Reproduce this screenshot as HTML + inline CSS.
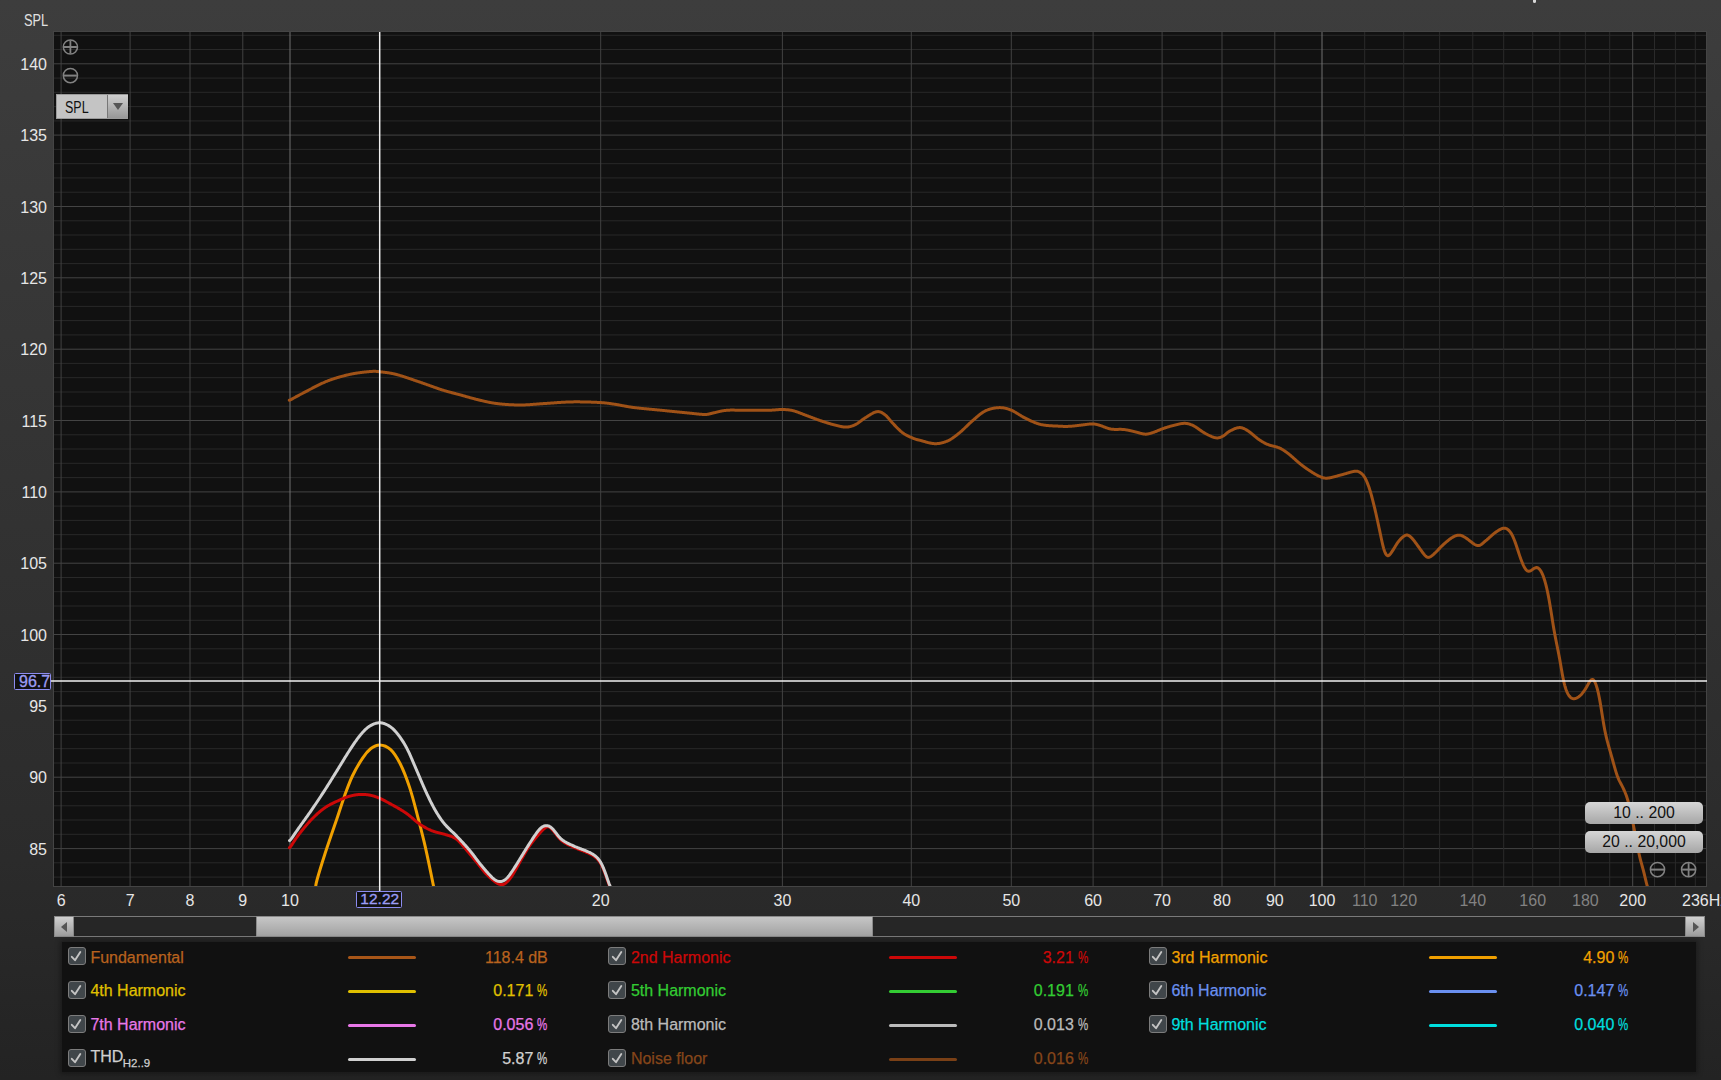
<!DOCTYPE html>
<html><head><meta charset="utf-8"><style>
*{margin:0;padding:0;box-sizing:border-box}
html,body{width:1721px;height:1080px;overflow:hidden}
body{background:linear-gradient(#3d3d3d 0px,#2b2b2b 860px,#232323 1080px);position:relative;font-family:"Liberation Sans",sans-serif;}
svg.main{position:absolute;left:0;top:0}
.yl{position:absolute;left:0;width:47px;text-align:right;color:#e6e6e6;font-size:16px;line-height:18px}
.xl{position:absolute;top:892px;width:100px;text-align:center;font-size:16px;line-height:18px}
.xw{color:#e6e6e6}.xg{color:#828282}
.spl{position:absolute;left:23.8px;top:12px;color:#e0e0e0;font-size:16px;line-height:18px;transform:scaleX(0.8);transform-origin:left}
.cursorx{position:absolute;left:355.5px;top:891px;width:46.5px;height:17px;border:1.2px solid #8c8cf0;border-radius:1.5px;background:#111;color:#9c9cf4;font-size:15.5px;line-height:14px;text-align:center;-webkit-text-stroke:0.3px currentColor;padding-left:2px}
.cursory{position:absolute;left:14px;top:672.8px;width:37px;height:17px;border:1.2px solid #8c8cf0;border-radius:1.5px;background:#111}
.cursory span{position:absolute;left:4px;top:-0.8px;color:#9c9cf4;font-size:16px;line-height:18px;-webkit-text-stroke:0.3px currentColor}
.dd{position:absolute;left:56px;top:94px;width:72px;height:25px;background:#c4c4c4;border:1px solid #9a9a9a}
.dd span{position:absolute;left:7.5px;top:2.8px;font-size:16px;line-height:19px;color:#111;transform:scaleX(0.78);transform-origin:left}
.dd i{position:absolute;left:50px;top:0;width:21px;height:23px;background:linear-gradient(#cfcfcf,#989898);border-left:1px solid #777}
.dd i:after{content:"";position:absolute;left:5px;top:8px;border-left:5.5px solid transparent;border-right:5.5px solid transparent;border-top:7px solid #555}
.btn{position:absolute;left:1585px;width:118px;height:22px;border-radius:5px;background:linear-gradient(#d6d6d6,#a6a6a6);color:#111;font-size:15.8px;line-height:22px;text-align:center}
.sb{position:absolute;left:54px;top:916px;width:1651px;height:21px;background:#262626;border:1px solid #7a7a7a}
.sbl,.sbr{position:absolute;top:-1px;width:20px;height:21px;background:linear-gradient(#d0d0d0,#9c9c9c);border:1px solid #8a8a8a}
.sbl{left:-1px}.sbr{right:-1px}
.sbl:after{content:"";position:absolute;left:5.5px;top:4.5px;border-top:5px solid transparent;border-bottom:5px solid transparent;border-right:6px solid #555}
.sbr:after{content:"";position:absolute;left:6.5px;top:4.5px;border-top:5px solid transparent;border-bottom:5px solid transparent;border-left:6px solid #555}
.thumb{position:absolute;left:201px;top:-1px;width:617px;height:21px;background:linear-gradient(#c6c6c6,#a2a2a2);border:1px solid #8a8a8a}
.panel{position:absolute;left:62px;top:942px;width:1634px;height:130px;background:#111;box-shadow:0 0 5px 2px rgba(0,0,0,0.3)}
.cb{position:absolute;width:18px;height:18px;border:1.5px solid #7c7c7c;border-radius:3px;background:#40464a}
.cb svg{position:absolute;left:-1.5px;top:-1.5px}
.ln{position:absolute;-webkit-text-stroke:0.25px currentColor;font-size:16px;line-height:18px;white-space:nowrap}
.ln sub{font-size:11.5px;vertical-align:-4.5px;line-height:0;margin-left:-0.5px}
.ls{position:absolute;width:68px;height:3px;border-radius:1.5px}
.pc{display:inline-block;width:10.5px;margin-left:4px;transform:scaleX(0.72);transform-origin:left}
.lv{position:absolute;-webkit-text-stroke:0.25px currentColor;width:200px;text-align:right;font-size:16px;line-height:18px;white-space:nowrap}
</style></head><body>
<svg class="main" width="1721" height="1080" viewBox="0 0 1721 1080">
<defs><clipPath id="pc"><rect x="54" y="32" width="1653" height="855"/></clipPath></defs>
<rect x="54" y="32" width="1653" height="855" fill="#111"/>
<line x1="54" x2="1707" y1="35.3" y2="35.3" stroke="#292929" stroke-width="1"/>
<line x1="54" x2="1707" y1="49.5" y2="49.5" stroke="#292929" stroke-width="1"/>
<line x1="54" x2="1707" y1="63.8" y2="63.8" stroke="#444444" stroke-width="1"/>
<line x1="54" x2="1707" y1="78.1" y2="78.1" stroke="#292929" stroke-width="1"/>
<line x1="54" x2="1707" y1="92.3" y2="92.3" stroke="#292929" stroke-width="1"/>
<line x1="54" x2="1707" y1="106.6" y2="106.6" stroke="#292929" stroke-width="1"/>
<line x1="54" x2="1707" y1="120.9" y2="120.9" stroke="#292929" stroke-width="1"/>
<line x1="54" x2="1707" y1="135.1" y2="135.1" stroke="#444444" stroke-width="1"/>
<line x1="54" x2="1707" y1="149.4" y2="149.4" stroke="#292929" stroke-width="1"/>
<line x1="54" x2="1707" y1="163.7" y2="163.7" stroke="#292929" stroke-width="1"/>
<line x1="54" x2="1707" y1="177.9" y2="177.9" stroke="#292929" stroke-width="1"/>
<line x1="54" x2="1707" y1="192.2" y2="192.2" stroke="#292929" stroke-width="1"/>
<line x1="54" x2="1707" y1="206.5" y2="206.5" stroke="#444444" stroke-width="1"/>
<line x1="54" x2="1707" y1="220.8" y2="220.8" stroke="#292929" stroke-width="1"/>
<line x1="54" x2="1707" y1="235.0" y2="235.0" stroke="#292929" stroke-width="1"/>
<line x1="54" x2="1707" y1="249.3" y2="249.3" stroke="#292929" stroke-width="1"/>
<line x1="54" x2="1707" y1="263.6" y2="263.6" stroke="#292929" stroke-width="1"/>
<line x1="54" x2="1707" y1="277.8" y2="277.8" stroke="#444444" stroke-width="1"/>
<line x1="54" x2="1707" y1="292.1" y2="292.1" stroke="#292929" stroke-width="1"/>
<line x1="54" x2="1707" y1="306.4" y2="306.4" stroke="#292929" stroke-width="1"/>
<line x1="54" x2="1707" y1="320.6" y2="320.6" stroke="#292929" stroke-width="1"/>
<line x1="54" x2="1707" y1="334.9" y2="334.9" stroke="#292929" stroke-width="1"/>
<line x1="54" x2="1707" y1="349.2" y2="349.2" stroke="#444444" stroke-width="1"/>
<line x1="54" x2="1707" y1="363.4" y2="363.4" stroke="#292929" stroke-width="1"/>
<line x1="54" x2="1707" y1="377.7" y2="377.7" stroke="#292929" stroke-width="1"/>
<line x1="54" x2="1707" y1="392.0" y2="392.0" stroke="#292929" stroke-width="1"/>
<line x1="54" x2="1707" y1="406.2" y2="406.2" stroke="#292929" stroke-width="1"/>
<line x1="54" x2="1707" y1="420.5" y2="420.5" stroke="#444444" stroke-width="1"/>
<line x1="54" x2="1707" y1="434.8" y2="434.8" stroke="#292929" stroke-width="1"/>
<line x1="54" x2="1707" y1="449.0" y2="449.0" stroke="#292929" stroke-width="1"/>
<line x1="54" x2="1707" y1="463.3" y2="463.3" stroke="#292929" stroke-width="1"/>
<line x1="54" x2="1707" y1="477.6" y2="477.6" stroke="#292929" stroke-width="1"/>
<line x1="54" x2="1707" y1="491.9" y2="491.9" stroke="#444444" stroke-width="1"/>
<line x1="54" x2="1707" y1="506.1" y2="506.1" stroke="#292929" stroke-width="1"/>
<line x1="54" x2="1707" y1="520.4" y2="520.4" stroke="#292929" stroke-width="1"/>
<line x1="54" x2="1707" y1="534.7" y2="534.7" stroke="#292929" stroke-width="1"/>
<line x1="54" x2="1707" y1="548.9" y2="548.9" stroke="#292929" stroke-width="1"/>
<line x1="54" x2="1707" y1="563.2" y2="563.2" stroke="#444444" stroke-width="1"/>
<line x1="54" x2="1707" y1="577.5" y2="577.5" stroke="#292929" stroke-width="1"/>
<line x1="54" x2="1707" y1="591.7" y2="591.7" stroke="#292929" stroke-width="1"/>
<line x1="54" x2="1707" y1="606.0" y2="606.0" stroke="#292929" stroke-width="1"/>
<line x1="54" x2="1707" y1="620.3" y2="620.3" stroke="#292929" stroke-width="1"/>
<line x1="54" x2="1707" y1="634.5" y2="634.5" stroke="#444444" stroke-width="1"/>
<line x1="54" x2="1707" y1="648.8" y2="648.8" stroke="#292929" stroke-width="1"/>
<line x1="54" x2="1707" y1="663.1" y2="663.1" stroke="#292929" stroke-width="1"/>
<line x1="54" x2="1707" y1="677.3" y2="677.3" stroke="#292929" stroke-width="1"/>
<line x1="54" x2="1707" y1="691.6" y2="691.6" stroke="#292929" stroke-width="1"/>
<line x1="54" x2="1707" y1="705.9" y2="705.9" stroke="#444444" stroke-width="1"/>
<line x1="54" x2="1707" y1="720.2" y2="720.2" stroke="#292929" stroke-width="1"/>
<line x1="54" x2="1707" y1="734.4" y2="734.4" stroke="#292929" stroke-width="1"/>
<line x1="54" x2="1707" y1="748.7" y2="748.7" stroke="#292929" stroke-width="1"/>
<line x1="54" x2="1707" y1="763.0" y2="763.0" stroke="#292929" stroke-width="1"/>
<line x1="54" x2="1707" y1="777.2" y2="777.2" stroke="#444444" stroke-width="1"/>
<line x1="54" x2="1707" y1="791.5" y2="791.5" stroke="#292929" stroke-width="1"/>
<line x1="54" x2="1707" y1="805.8" y2="805.8" stroke="#292929" stroke-width="1"/>
<line x1="54" x2="1707" y1="820.0" y2="820.0" stroke="#292929" stroke-width="1"/>
<line x1="54" x2="1707" y1="834.3" y2="834.3" stroke="#292929" stroke-width="1"/>
<line x1="54" x2="1707" y1="848.6" y2="848.6" stroke="#444444" stroke-width="1"/>
<line x1="54" x2="1707" y1="862.8" y2="862.8" stroke="#292929" stroke-width="1"/>
<line x1="54" x2="1707" y1="877.1" y2="877.1" stroke="#292929" stroke-width="1"/>
<line x1="61.1" x2="61.1" y1="32" y2="887" stroke="#424242" stroke-width="1"/>
<line x1="130.1" x2="130.1" y1="32" y2="887" stroke="#424242" stroke-width="1"/>
<line x1="190.0" x2="190.0" y1="32" y2="887" stroke="#424242" stroke-width="1"/>
<line x1="242.8" x2="242.8" y1="32" y2="887" stroke="#424242" stroke-width="1"/>
<line x1="290.0" x2="290.0" y1="32" y2="887" stroke="#707070" stroke-width="1"/>
<line x1="600.7" x2="600.7" y1="32" y2="887" stroke="#424242" stroke-width="1"/>
<line x1="782.4" x2="782.4" y1="32" y2="887" stroke="#424242" stroke-width="1"/>
<line x1="911.3" x2="911.3" y1="32" y2="887" stroke="#424242" stroke-width="1"/>
<line x1="1011.3" x2="1011.3" y1="32" y2="887" stroke="#424242" stroke-width="1"/>
<line x1="1093.1" x2="1093.1" y1="32" y2="887" stroke="#424242" stroke-width="1"/>
<line x1="1162.1" x2="1162.1" y1="32" y2="887" stroke="#424242" stroke-width="1"/>
<line x1="1222.0" x2="1222.0" y1="32" y2="887" stroke="#424242" stroke-width="1"/>
<line x1="1274.8" x2="1274.8" y1="32" y2="887" stroke="#424242" stroke-width="1"/>
<line x1="1322.0" x2="1322.0" y1="32" y2="887" stroke="#707070" stroke-width="1"/>
<line x1="1364.7" x2="1364.7" y1="32" y2="887" stroke="#2a2a2a" stroke-width="1"/>
<line x1="1403.7" x2="1403.7" y1="32" y2="887" stroke="#2a2a2a" stroke-width="1"/>
<line x1="1439.6" x2="1439.6" y1="32" y2="887" stroke="#2a2a2a" stroke-width="1"/>
<line x1="1472.8" x2="1472.8" y1="32" y2="887" stroke="#2a2a2a" stroke-width="1"/>
<line x1="1503.7" x2="1503.7" y1="32" y2="887" stroke="#2a2a2a" stroke-width="1"/>
<line x1="1532.7" x2="1532.7" y1="32" y2="887" stroke="#2a2a2a" stroke-width="1"/>
<line x1="1559.8" x2="1559.8" y1="32" y2="887" stroke="#2a2a2a" stroke-width="1"/>
<line x1="1585.4" x2="1585.4" y1="32" y2="887" stroke="#2a2a2a" stroke-width="1"/>
<line x1="1609.7" x2="1609.7" y1="32" y2="887" stroke="#2a2a2a" stroke-width="1"/>
<line x1="1632.7" x2="1632.7" y1="32" y2="887" stroke="#4a4a4a" stroke-width="1"/>
<line x1="1654.5" x2="1654.5" y1="32" y2="887" stroke="#2a2a2a" stroke-width="1"/>
<line x1="1675.4" x2="1675.4" y1="32" y2="887" stroke="#2a2a2a" stroke-width="1"/>
<line x1="1695.3" x2="1695.3" y1="32" y2="887" stroke="#2a2a2a" stroke-width="1"/>
<g clip-path="url(#pc)" fill="none" stroke-linecap="round" stroke-linejoin="round">
<path d="M289.3,400.24 L289.8,400.08 L290.3,399.88 L290.8,399.65 L291.3,399.39 L291.8,399.12 L292.3,398.85 L292.8,398.57 L293.3,398.30 L293.8,398.02 L294.3,397.75 L294.8,397.47 L295.3,397.20 L295.8,396.93 L296.3,396.66 L296.8,396.38 L297.3,396.11 L297.8,395.84 L298.3,395.58 L298.8,395.31 L299.3,395.04 L299.8,394.78 L300.3,394.51 L300.8,394.25 L301.3,393.99 L301.8,393.73 L302.3,393.47 L302.8,393.21 L303.3,392.95 L303.8,392.69 L304.3,392.43 L304.8,392.17 L305.3,391.90 L305.8,391.64 L306.3,391.38 L306.8,391.11 L307.3,390.85 L307.8,390.58 L308.3,390.32 L308.8,390.05 L309.3,389.78 L309.8,389.52 L310.3,389.25 L310.8,388.99 L311.3,388.73 L311.8,388.46 L312.3,388.20 L312.8,387.94 L313.3,387.68 L313.8,387.42 L314.3,387.16 L314.8,386.90 L315.3,386.64 L315.8,386.39 L316.3,386.13 L316.8,385.88 L317.3,385.63 L317.8,385.38 L318.3,385.13 L318.8,384.88 L319.3,384.64 L319.8,384.40 L320.3,384.16 L320.8,383.92 L321.3,383.68 L321.8,383.45 L322.3,383.22 L322.8,382.99 L323.3,382.77 L323.8,382.55 L324.3,382.33 L324.8,382.12 L325.3,381.90 L325.8,381.70 L326.3,381.49 L326.8,381.29 L327.3,381.09 L327.8,380.90 L328.3,380.71 L328.8,380.52 L329.3,380.33 L329.8,380.15 L330.3,379.96 L330.8,379.78 L331.3,379.61 L331.8,379.43 L332.3,379.26 L332.8,379.09 L333.3,378.92 L333.8,378.75 L334.3,378.59 L334.8,378.43 L335.3,378.27 L335.8,378.11 L336.3,377.95 L336.8,377.80 L337.3,377.65 L337.8,377.50 L338.3,377.35 L338.8,377.20 L339.3,377.06 L339.8,376.91 L340.3,376.77 L340.8,376.63 L341.3,376.49 L341.8,376.36 L342.3,376.22 L342.8,376.09 L343.3,375.96 L343.8,375.83 L344.3,375.70 L344.8,375.57 L345.3,375.45 L345.8,375.32 L346.3,375.20 L346.8,375.08 L347.3,374.96 L347.8,374.84 L348.3,374.72 L348.8,374.61 L349.3,374.50 L349.8,374.39 L350.3,374.28 L350.8,374.17 L351.3,374.07 L351.8,373.97 L352.3,373.87 L352.8,373.77 L353.3,373.68 L353.8,373.59 L354.3,373.50 L354.8,373.41 L355.3,373.33 L355.8,373.25 L356.3,373.17 L356.8,373.09 L357.3,373.01 L357.8,372.94 L358.3,372.86 L358.8,372.79 L359.3,372.72 L359.8,372.66 L360.3,372.59 L360.8,372.53 L361.3,372.46 L361.8,372.40 L362.3,372.34 L362.8,372.28 L363.3,372.22 L363.8,372.17 L364.3,372.11 L364.8,372.06 L365.3,372.00 L365.8,371.95 L366.3,371.90 L366.8,371.85 L367.3,371.80 L367.8,371.75 L368.3,371.71 L368.8,371.66 L369.3,371.62 L369.8,371.57 L370.3,371.53 L370.8,371.49 L371.3,371.45 L371.8,371.41 L372.3,371.38 L372.8,371.35 L373.3,371.33 L373.8,371.32 L374.3,371.31 L374.8,371.31 L375.3,371.33 L375.8,371.35 L376.3,371.39 L376.8,371.43 L377.3,371.48 L377.8,371.54 L378.3,371.60 L378.8,371.66 L379.3,371.71 L379.8,371.77 L380.3,371.83 L380.8,371.89 L381.3,371.94 L381.8,372.00 L382.3,372.05 L382.8,372.11 L383.3,372.16 L383.8,372.22 L384.3,372.28 L384.8,372.34 L385.3,372.40 L385.8,372.46 L386.3,372.52 L386.8,372.59 L387.3,372.66 L387.8,372.73 L388.3,372.81 L388.8,372.89 L389.3,372.97 L389.8,373.05 L390.3,373.14 L390.8,373.23 L391.3,373.32 L391.8,373.41 L392.3,373.51 L392.8,373.62 L393.3,373.72 L393.8,373.83 L394.3,373.95 L394.8,374.06 L395.3,374.18 L395.8,374.31 L396.3,374.44 L396.8,374.57 L397.3,374.70 L397.8,374.84 L398.3,374.98 L398.8,375.12 L399.3,375.27 L399.8,375.42 L400.3,375.57 L400.8,375.72 L401.3,375.87 L401.8,376.03 L402.3,376.18 L402.8,376.34 L403.3,376.50 L403.8,376.66 L404.3,376.83 L404.8,376.99 L405.3,377.15 L405.8,377.32 L406.3,377.49 L406.8,377.65 L407.3,377.82 L407.8,377.99 L408.3,378.16 L408.8,378.33 L409.3,378.50 L409.8,378.67 L410.3,378.84 L410.8,379.01 L411.3,379.18 L411.8,379.36 L412.3,379.53 L412.8,379.70 L413.3,379.87 L413.8,380.05 L414.3,380.22 L414.8,380.39 L415.3,380.56 L415.8,380.74 L416.3,380.91 L416.8,381.08 L417.3,381.25 L417.8,381.42 L418.3,381.59 L418.8,381.76 L419.3,381.93 L419.8,382.10 L420.3,382.27 L420.8,382.45 L421.3,382.62 L421.8,382.79 L422.3,382.96 L422.8,383.14 L423.3,383.31 L423.8,383.49 L424.3,383.67 L424.8,383.84 L425.3,384.02 L425.8,384.20 L426.3,384.38 L426.8,384.55 L427.3,384.73 L427.8,384.91 L428.3,385.09 L428.8,385.27 L429.3,385.45 L429.8,385.63 L430.3,385.81 L430.8,385.99 L431.3,386.17 L431.8,386.35 L432.3,386.53 L432.8,386.71 L433.3,386.88 L433.8,387.06 L434.3,387.24 L434.8,387.42 L435.3,387.59 L435.8,387.77 L436.3,387.94 L436.8,388.12 L437.3,388.29 L437.8,388.47 L438.3,388.64 L438.8,388.81 L439.3,388.98 L439.8,389.15 L440.3,389.31 L440.8,389.48 L441.3,389.64 L441.8,389.81 L442.3,389.97 L442.8,390.13 L443.3,390.28 L443.8,390.44 L444.3,390.59 L444.8,390.74 L445.3,390.89 L445.8,391.04 L446.3,391.18 L446.8,391.33 L447.3,391.47 L447.8,391.61 L448.3,391.75 L448.8,391.88 L449.3,392.02 L449.8,392.15 L450.3,392.29 L450.8,392.42 L451.3,392.55 L451.8,392.68 L452.3,392.81 L452.8,392.93 L453.3,393.06 L453.8,393.19 L454.3,393.32 L454.8,393.44 L455.3,393.57 L455.8,393.70 L456.3,393.83 L456.8,393.96 L457.3,394.09 L457.8,394.22 L458.3,394.35 L458.8,394.48 L459.3,394.61 L459.8,394.75 L460.3,394.89 L460.8,395.02 L461.3,395.16 L461.8,395.30 L462.3,395.44 L462.8,395.58 L463.3,395.72 L463.8,395.86 L464.3,396.01 L464.8,396.15 L465.3,396.29 L465.8,396.44 L466.3,396.58 L466.8,396.72 L467.3,396.86 L467.8,397.01 L468.3,397.15 L468.8,397.29 L469.3,397.43 L469.8,397.58 L470.3,397.72 L470.8,397.86 L471.3,398.00 L471.8,398.13 L472.3,398.27 L472.8,398.41 L473.3,398.54 L473.8,398.68 L474.3,398.81 L474.8,398.94 L475.3,399.07 L475.8,399.20 L476.3,399.33 L476.8,399.46 L477.3,399.58 L477.8,399.70 L478.3,399.82 L478.8,399.95 L479.3,400.07 L479.8,400.18 L480.3,400.30 L480.8,400.42 L481.3,400.54 L481.8,400.66 L482.3,400.78 L482.8,400.90 L483.3,401.01 L483.8,401.13 L484.3,401.24 L484.8,401.36 L485.3,401.47 L485.8,401.58 L486.3,401.69 L486.8,401.80 L487.3,401.91 L487.8,402.02 L488.3,402.12 L488.8,402.22 L489.3,402.32 L489.8,402.42 L490.3,402.51 L490.8,402.61 L491.3,402.70 L491.8,402.79 L492.3,402.87 L492.8,402.96 L493.3,403.04 L493.8,403.12 L494.3,403.20 L494.8,403.27 L495.3,403.34 L495.8,403.41 L496.3,403.48 L496.8,403.54 L497.3,403.61 L497.8,403.67 L498.3,403.73 L498.8,403.78 L499.3,403.84 L499.8,403.89 L500.3,403.94 L500.8,403.99 L501.3,404.04 L501.8,404.09 L502.3,404.14 L502.8,404.18 L503.3,404.23 L503.8,404.27 L504.3,404.31 L504.8,404.35 L505.3,404.39 L505.8,404.43 L506.3,404.47 L506.8,404.50 L507.3,404.54 L507.8,404.57 L508.3,404.60 L508.8,404.63 L509.3,404.66 L509.8,404.69 L510.3,404.72 L510.8,404.74 L511.3,404.77 L511.8,404.79 L512.3,404.81 L512.8,404.83 L513.3,404.85 L513.8,404.87 L514.3,404.89 L514.8,404.91 L515.3,404.92 L515.8,404.93 L516.3,404.95 L516.8,404.96 L517.3,404.97 L517.8,404.98 L518.3,404.98 L518.8,404.99 L519.3,404.99 L519.8,404.99 L520.3,404.99 L520.8,404.99 L521.3,404.99 L521.8,404.98 L522.3,404.98 L522.8,404.97 L523.3,404.95 L523.8,404.94 L524.3,404.92 L524.8,404.90 L525.3,404.88 L525.8,404.86 L526.3,404.84 L526.8,404.81 L527.3,404.79 L527.8,404.76 L528.3,404.73 L528.8,404.70 L529.3,404.66 L529.8,404.63 L530.3,404.59 L530.8,404.56 L531.3,404.52 L531.8,404.48 L532.3,404.45 L532.8,404.41 L533.3,404.37 L533.8,404.33 L534.3,404.29 L534.8,404.25 L535.3,404.21 L535.8,404.17 L536.3,404.13 L536.8,404.09 L537.3,404.05 L537.8,404.01 L538.3,403.97 L538.8,403.93 L539.3,403.90 L539.8,403.86 L540.3,403.82 L540.8,403.79 L541.3,403.75 L541.8,403.72 L542.3,403.69 L542.8,403.65 L543.3,403.62 L543.8,403.59 L544.3,403.56 L544.8,403.52 L545.3,403.49 L545.8,403.46 L546.3,403.42 L546.8,403.39 L547.3,403.35 L547.8,403.32 L548.3,403.28 L548.8,403.25 L549.3,403.21 L549.8,403.17 L550.3,403.14 L550.8,403.10 L551.3,403.06 L551.8,403.03 L552.3,402.99 L552.8,402.95 L553.3,402.91 L553.8,402.88 L554.3,402.84 L554.8,402.80 L555.3,402.77 L555.8,402.73 L556.3,402.69 L556.8,402.66 L557.3,402.62 L557.8,402.59 L558.3,402.55 L558.8,402.52 L559.3,402.48 L559.8,402.45 L560.3,402.42 L560.8,402.39 L561.3,402.35 L561.8,402.32 L562.3,402.29 L562.8,402.26 L563.3,402.23 L563.8,402.21 L564.3,402.18 L564.8,402.15 L565.3,402.13 L565.8,402.10 L566.3,402.08 L566.8,402.06 L567.3,402.04 L567.8,402.02 L568.3,402.00 L568.8,401.98 L569.3,401.96 L569.8,401.95 L570.3,401.93 L570.8,401.92 L571.3,401.91 L571.8,401.90 L572.3,401.89 L572.8,401.88 L573.3,401.88 L573.8,401.87 L574.3,401.87 L574.8,401.86 L575.3,401.86 L575.8,401.86 L576.3,401.86 L576.8,401.86 L577.3,401.86 L577.8,401.86 L578.3,401.86 L578.8,401.86 L579.3,401.87 L579.8,401.87 L580.3,401.88 L580.8,401.88 L581.3,401.89 L581.8,401.90 L582.3,401.90 L582.8,401.91 L583.3,401.92 L583.8,401.93 L584.3,401.94 L584.8,401.95 L585.3,401.96 L585.8,401.97 L586.3,401.99 L586.8,402.00 L587.3,402.01 L587.8,402.03 L588.3,402.04 L588.8,402.05 L589.3,402.07 L589.8,402.09 L590.3,402.10 L590.8,402.12 L591.3,402.14 L591.8,402.16 L592.3,402.17 L592.8,402.19 L593.3,402.21 L593.8,402.23 L594.3,402.26 L594.8,402.28 L595.3,402.30 L595.8,402.32 L596.3,402.34 L596.8,402.37 L597.3,402.39 L597.8,402.42 L598.3,402.44 L598.8,402.47 L599.3,402.50 L599.8,402.53 L600.3,402.56 L600.8,402.59 L601.3,402.62 L601.8,402.66 L602.3,402.69 L602.8,402.73 L603.3,402.77 L603.8,402.81 L604.3,402.86 L604.8,402.91 L605.3,402.96 L605.8,403.01 L606.3,403.07 L606.8,403.12 L607.3,403.18 L607.8,403.25 L608.3,403.31 L608.8,403.38 L609.3,403.45 L609.8,403.52 L610.3,403.59 L610.8,403.67 L611.3,403.74 L611.8,403.82 L612.3,403.89 L612.8,403.97 L613.3,404.05 L613.8,404.12 L614.3,404.20 L614.8,404.27 L615.3,404.35 L615.8,404.43 L616.3,404.51 L616.8,404.59 L617.3,404.67 L617.8,404.76 L618.3,404.85 L618.8,404.94 L619.3,405.03 L619.8,405.12 L620.3,405.22 L620.8,405.31 L621.3,405.41 L621.8,405.50 L622.3,405.60 L622.8,405.70 L623.3,405.79 L623.8,405.89 L624.3,405.98 L624.8,406.08 L625.3,406.17 L625.8,406.26 L626.3,406.35 L626.8,406.44 L627.3,406.53 L627.8,406.62 L628.3,406.70 L628.8,406.79 L629.3,406.87 L629.8,406.95 L630.3,407.03 L630.8,407.10 L631.3,407.18 L631.8,407.25 L632.3,407.32 L632.8,407.39 L633.3,407.46 L633.8,407.52 L634.3,407.58 L634.8,407.65 L635.3,407.71 L635.8,407.77 L636.3,407.83 L636.8,407.88 L637.3,407.94 L637.8,408.00 L638.3,408.05 L638.8,408.11 L639.3,408.16 L639.8,408.21 L640.3,408.27 L640.8,408.32 L641.3,408.37 L641.8,408.42 L642.3,408.47 L642.8,408.52 L643.3,408.57 L643.8,408.62 L644.3,408.67 L644.8,408.72 L645.3,408.76 L645.8,408.81 L646.3,408.86 L646.8,408.91 L647.3,408.96 L647.8,409.00 L648.3,409.05 L648.8,409.10 L649.3,409.14 L649.8,409.19 L650.3,409.24 L650.8,409.28 L651.3,409.33 L651.8,409.38 L652.3,409.42 L652.8,409.47 L653.3,409.52 L653.8,409.56 L654.3,409.61 L654.8,409.66 L655.3,409.70 L655.8,409.75 L656.3,409.80 L656.8,409.84 L657.3,409.89 L657.8,409.94 L658.3,409.99 L658.8,410.04 L659.3,410.08 L659.8,410.13 L660.3,410.18 L660.8,410.23 L661.3,410.28 L661.8,410.33 L662.3,410.38 L662.8,410.43 L663.3,410.48 L663.8,410.53 L664.3,410.58 L664.8,410.63 L665.3,410.68 L665.8,410.73 L666.3,410.79 L666.8,410.84 L667.3,410.89 L667.8,410.94 L668.3,410.99 L668.8,411.04 L669.3,411.09 L669.8,411.14 L670.3,411.19 L670.8,411.24 L671.3,411.29 L671.8,411.34 L672.3,411.40 L672.8,411.45 L673.3,411.50 L673.8,411.55 L674.3,411.60 L674.8,411.65 L675.3,411.70 L675.8,411.75 L676.3,411.80 L676.8,411.85 L677.3,411.90 L677.8,411.95 L678.3,412.00 L678.8,412.06 L679.3,412.11 L679.8,412.16 L680.3,412.21 L680.8,412.26 L681.3,412.31 L681.8,412.36 L682.3,412.41 L682.8,412.46 L683.3,412.51 L683.8,412.56 L684.3,412.61 L684.8,412.66 L685.3,412.71 L685.8,412.76 L686.3,412.81 L686.8,412.86 L687.3,412.90 L687.8,412.95 L688.3,413.00 L688.8,413.05 L689.3,413.10 L689.8,413.15 L690.3,413.20 L690.8,413.25 L691.3,413.30 L691.8,413.35 L692.3,413.40 L692.8,413.46 L693.3,413.51 L693.8,413.56 L694.3,413.62 L694.8,413.67 L695.3,413.72 L695.8,413.78 L696.3,413.83 L696.8,413.89 L697.3,413.94 L697.8,413.99 L698.3,414.04 L698.8,414.09 L699.3,414.14 L699.8,414.19 L700.3,414.23 L700.8,414.28 L701.3,414.32 L701.8,414.35 L702.3,414.39 L702.8,414.42 L703.3,414.44 L703.8,414.46 L704.3,414.47 L704.8,414.48 L705.3,414.47 L705.8,414.46 L706.3,414.43 L706.8,414.39 L707.3,414.34 L707.8,414.26 L708.3,414.17 L708.8,414.06 L709.3,413.94 L709.8,413.81 L710.3,413.68 L710.8,413.54 L711.3,413.42 L711.8,413.29 L712.3,413.17 L712.8,413.06 L713.3,412.95 L713.8,412.83 L714.3,412.72 L714.8,412.60 L715.3,412.48 L715.8,412.36 L716.3,412.24 L716.8,412.11 L717.3,411.99 L717.8,411.87 L718.3,411.75 L718.8,411.63 L719.3,411.52 L719.8,411.40 L720.3,411.29 L720.8,411.19 L721.3,411.09 L721.8,410.99 L722.3,410.89 L722.8,410.81 L723.3,410.72 L723.8,410.64 L724.3,410.57 L724.8,410.50 L725.3,410.44 L725.8,410.39 L726.3,410.34 L726.8,410.29 L727.3,410.25 L727.8,410.22 L728.3,410.19 L728.8,410.17 L729.3,410.15 L729.8,410.13 L730.3,410.12 L730.8,410.11 L731.3,410.11 L731.8,410.10 L732.3,410.10 L732.8,410.10 L733.3,410.11 L733.8,410.11 L734.3,410.12 L734.8,410.13 L735.3,410.14 L735.8,410.15 L736.3,410.16 L736.8,410.17 L737.3,410.18 L737.8,410.19 L738.3,410.20 L738.8,410.22 L739.3,410.23 L739.8,410.24 L740.3,410.25 L740.8,410.26 L741.3,410.27 L741.8,410.27 L742.3,410.28 L742.8,410.29 L743.3,410.29 L743.8,410.29 L744.3,410.30 L744.8,410.30 L745.3,410.30 L745.8,410.30 L746.3,410.30 L746.8,410.30 L747.3,410.30 L747.8,410.30 L748.3,410.30 L748.8,410.30 L749.3,410.30 L749.8,410.30 L750.3,410.30 L750.8,410.30 L751.3,410.30 L751.8,410.30 L752.3,410.30 L752.8,410.30 L753.3,410.30 L753.8,410.30 L754.3,410.30 L754.8,410.30 L755.3,410.30 L755.8,410.30 L756.3,410.30 L756.8,410.29 L757.3,410.29 L757.8,410.29 L758.3,410.29 L758.8,410.29 L759.3,410.29 L759.8,410.29 L760.3,410.29 L760.8,410.29 L761.3,410.29 L761.8,410.28 L762.3,410.28 L762.8,410.28 L763.3,410.28 L763.8,410.27 L764.3,410.27 L764.8,410.27 L765.3,410.26 L765.8,410.26 L766.3,410.25 L766.8,410.25 L767.3,410.24 L767.8,410.24 L768.3,410.23 L768.8,410.22 L769.3,410.21 L769.8,410.20 L770.3,410.19 L770.8,410.17 L771.3,410.15 L771.8,410.13 L772.3,410.11 L772.8,410.08 L773.3,410.06 L773.8,410.02 L774.3,409.99 L774.8,409.95 L775.3,409.91 L775.8,409.87 L776.3,409.82 L776.8,409.78 L777.3,409.74 L777.8,409.69 L778.3,409.65 L778.8,409.61 L779.3,409.58 L779.8,409.56 L780.3,409.53 L780.8,409.52 L781.3,409.51 L781.8,409.51 L782.3,409.51 L782.8,409.52 L783.3,409.53 L783.8,409.55 L784.3,409.56 L784.8,409.58 L785.3,409.60 L785.8,409.63 L786.3,409.66 L786.8,409.69 L787.3,409.74 L787.8,409.78 L788.3,409.83 L788.8,409.89 L789.3,409.96 L789.8,410.03 L790.3,410.11 L790.8,410.20 L791.3,410.29 L791.8,410.40 L792.3,410.51 L792.8,410.62 L793.3,410.75 L793.8,410.88 L794.3,411.02 L794.8,411.17 L795.3,411.32 L795.8,411.48 L796.3,411.65 L796.8,411.82 L797.3,411.99 L797.8,412.17 L798.3,412.36 L798.8,412.54 L799.3,412.73 L799.8,412.92 L800.3,413.12 L800.8,413.31 L801.3,413.51 L801.8,413.71 L802.3,413.90 L802.8,414.10 L803.3,414.30 L803.8,414.49 L804.3,414.69 L804.8,414.88 L805.3,415.08 L805.8,415.27 L806.3,415.46 L806.8,415.65 L807.3,415.83 L807.8,416.02 L808.3,416.21 L808.8,416.39 L809.3,416.58 L809.8,416.77 L810.3,416.95 L810.8,417.14 L811.3,417.33 L811.8,417.52 L812.3,417.71 L812.8,417.90 L813.3,418.09 L813.8,418.27 L814.3,418.46 L814.8,418.65 L815.3,418.83 L815.8,419.02 L816.3,419.20 L816.8,419.39 L817.3,419.57 L817.8,419.75 L818.3,419.93 L818.8,420.10 L819.3,420.28 L819.8,420.45 L820.3,420.62 L820.8,420.79 L821.3,420.96 L821.8,421.13 L822.3,421.29 L822.8,421.46 L823.3,421.62 L823.8,421.78 L824.3,421.95 L824.8,422.11 L825.3,422.27 L825.8,422.42 L826.3,422.58 L826.8,422.74 L827.3,422.89 L827.8,423.05 L828.3,423.20 L828.8,423.35 L829.3,423.50 L829.8,423.65 L830.3,423.79 L830.8,423.94 L831.3,424.08 L831.8,424.22 L832.3,424.36 L832.8,424.49 L833.3,424.63 L833.8,424.76 L834.3,424.89 L834.8,425.02 L835.3,425.15 L835.8,425.27 L836.3,425.40 L836.8,425.53 L837.3,425.65 L837.8,425.78 L838.3,425.90 L838.8,426.02 L839.3,426.14 L839.8,426.25 L840.3,426.37 L840.8,426.47 L841.3,426.57 L841.8,426.67 L842.3,426.75 L842.8,426.83 L843.3,426.90 L843.8,426.95 L844.3,427.00 L844.8,427.03 L845.3,427.06 L845.8,427.06 L846.3,427.06 L846.8,427.04 L847.3,427.00 L847.8,426.96 L848.3,426.90 L848.8,426.82 L849.3,426.73 L849.8,426.63 L850.3,426.52 L850.8,426.39 L851.3,426.24 L851.8,426.09 L852.3,425.92 L852.8,425.74 L853.3,425.55 L853.8,425.34 L854.3,425.12 L854.8,424.90 L855.3,424.65 L855.8,424.39 L856.3,424.12 L856.8,423.82 L857.3,423.51 L857.8,423.18 L858.3,422.83 L858.8,422.47 L859.3,422.10 L859.8,421.72 L860.3,421.34 L860.8,420.96 L861.3,420.58 L861.8,420.20 L862.3,419.83 L862.8,419.47 L863.3,419.11 L863.8,418.77 L864.3,418.44 L864.8,418.11 L865.3,417.79 L865.8,417.47 L866.3,417.15 L866.8,416.83 L867.3,416.51 L867.8,416.19 L868.3,415.87 L868.8,415.56 L869.3,415.24 L869.8,414.93 L870.3,414.63 L870.8,414.32 L871.3,414.03 L871.8,413.75 L872.3,413.47 L872.8,413.20 L873.3,412.95 L873.8,412.71 L874.3,412.49 L874.8,412.28 L875.3,412.10 L875.8,411.94 L876.3,411.81 L876.8,411.72 L877.3,411.65 L877.8,411.62 L878.3,411.62 L878.8,411.66 L879.3,411.73 L879.8,411.85 L880.3,412.00 L880.8,412.18 L881.3,412.40 L881.8,412.65 L882.3,412.93 L882.8,413.24 L883.3,413.56 L883.8,413.91 L884.3,414.27 L884.8,414.65 L885.3,415.05 L885.8,415.47 L886.3,415.93 L886.8,416.41 L887.3,416.93 L887.8,417.48 L888.3,418.05 L888.8,418.64 L889.3,419.24 L889.8,419.84 L890.3,420.44 L890.8,421.03 L891.3,421.62 L891.8,422.18 L892.3,422.74 L892.8,423.28 L893.3,423.81 L893.8,424.34 L894.3,424.87 L894.8,425.39 L895.3,425.91 L895.8,426.43 L896.3,426.95 L896.8,427.46 L897.3,427.97 L897.8,428.47 L898.3,428.97 L898.8,429.45 L899.3,429.93 L899.8,430.39 L900.3,430.84 L900.8,431.28 L901.3,431.70 L901.8,432.11 L902.3,432.50 L902.8,432.87 L903.3,433.23 L903.8,433.57 L904.3,433.90 L904.8,434.21 L905.3,434.51 L905.8,434.80 L906.3,435.07 L906.8,435.34 L907.3,435.60 L907.8,435.85 L908.3,436.09 L908.8,436.33 L909.3,436.56 L909.8,436.79 L910.3,437.02 L910.8,437.24 L911.3,437.45 L911.8,437.67 L912.3,437.88 L912.8,438.09 L913.3,438.30 L913.8,438.51 L914.3,438.71 L914.8,438.90 L915.3,439.09 L915.8,439.26 L916.3,439.41 L916.8,439.55 L917.3,439.68 L917.8,439.80 L918.3,439.92 L918.8,440.03 L919.3,440.15 L919.8,440.27 L920.3,440.39 L920.8,440.52 L921.3,440.66 L921.8,440.80 L922.3,440.94 L922.8,441.08 L923.3,441.23 L923.8,441.37 L924.3,441.52 L924.8,441.66 L925.3,441.80 L925.8,441.94 L926.3,442.08 L926.8,442.22 L927.3,442.35 L927.8,442.49 L928.3,442.61 L928.8,442.73 L929.3,442.85 L929.8,442.97 L930.3,443.07 L930.8,443.17 L931.3,443.27 L931.8,443.35 L932.3,443.43 L932.8,443.50 L933.3,443.56 L933.8,443.60 L934.3,443.64 L934.8,443.66 L935.3,443.67 L935.8,443.67 L936.3,443.66 L936.8,443.64 L937.3,443.61 L937.8,443.57 L938.3,443.52 L938.8,443.46 L939.3,443.39 L939.8,443.31 L940.3,443.23 L940.8,443.13 L941.3,443.02 L941.8,442.91 L942.3,442.78 L942.8,442.65 L943.3,442.50 L943.8,442.35 L944.3,442.19 L944.8,442.02 L945.3,441.84 L945.8,441.65 L946.3,441.46 L946.8,441.25 L947.3,441.04 L947.8,440.81 L948.3,440.58 L948.8,440.33 L949.3,440.08 L949.8,439.81 L950.3,439.53 L950.8,439.23 L951.3,438.93 L951.8,438.61 L952.3,438.29 L952.8,437.95 L953.3,437.60 L953.8,437.25 L954.3,436.89 L954.8,436.52 L955.3,436.14 L955.8,435.76 L956.3,435.37 L956.8,434.98 L957.3,434.58 L957.8,434.18 L958.3,433.78 L958.8,433.37 L959.3,432.96 L959.8,432.55 L960.3,432.13 L960.8,431.70 L961.3,431.27 L961.8,430.83 L962.3,430.38 L962.8,429.92 L963.3,429.45 L963.8,428.98 L964.3,428.50 L964.8,428.02 L965.3,427.53 L965.8,427.04 L966.3,426.56 L966.8,426.07 L967.3,425.58 L967.8,425.09 L968.3,424.61 L968.8,424.13 L969.3,423.66 L969.8,423.19 L970.3,422.73 L970.8,422.28 L971.3,421.83 L971.8,421.38 L972.3,420.94 L972.8,420.51 L973.3,420.07 L973.8,419.63 L974.3,419.19 L974.8,418.76 L975.3,418.32 L975.8,417.88 L976.3,417.44 L976.8,417.01 L977.3,416.58 L977.8,416.16 L978.3,415.74 L978.8,415.33 L979.3,414.93 L979.8,414.53 L980.3,414.14 L980.8,413.77 L981.3,413.40 L981.8,413.05 L982.3,412.70 L982.8,412.37 L983.3,412.06 L983.8,411.76 L984.3,411.47 L984.8,411.20 L985.3,410.94 L985.8,410.70 L986.3,410.47 L986.8,410.25 L987.3,410.04 L987.8,409.84 L988.3,409.66 L988.8,409.48 L989.3,409.31 L989.8,409.15 L990.3,409.00 L990.8,408.86 L991.3,408.73 L991.8,408.60 L992.3,408.49 L992.8,408.38 L993.3,408.28 L993.8,408.18 L994.3,408.09 L994.8,408.01 L995.3,407.94 L995.8,407.88 L996.3,407.82 L996.8,407.77 L997.3,407.72 L997.8,407.68 L998.3,407.65 L998.8,407.63 L999.3,407.62 L999.8,407.61 L1000.3,407.62 L1000.8,407.63 L1001.3,407.65 L1001.8,407.69 L1002.3,407.73 L1002.8,407.79 L1003.3,407.86 L1003.8,407.93 L1004.3,408.02 L1004.8,408.12 L1005.3,408.23 L1005.8,408.35 L1006.3,408.48 L1006.8,408.62 L1007.3,408.76 L1007.8,408.92 L1008.3,409.08 L1008.8,409.25 L1009.3,409.43 L1009.8,409.61 L1010.3,409.81 L1010.8,410.01 L1011.3,410.21 L1011.8,410.43 L1012.3,410.66 L1012.8,410.91 L1013.3,411.16 L1013.8,411.42 L1014.3,411.70 L1014.8,411.98 L1015.3,412.27 L1015.8,412.56 L1016.3,412.87 L1016.8,413.17 L1017.3,413.48 L1017.8,413.79 L1018.3,414.10 L1018.8,414.42 L1019.3,414.73 L1019.8,415.04 L1020.3,415.35 L1020.8,415.65 L1021.3,415.95 L1021.8,416.25 L1022.3,416.54 L1022.8,416.82 L1023.3,417.10 L1023.8,417.37 L1024.3,417.63 L1024.8,417.89 L1025.3,418.14 L1025.8,418.39 L1026.3,418.63 L1026.8,418.88 L1027.3,419.13 L1027.8,419.37 L1028.3,419.61 L1028.8,419.86 L1029.3,420.10 L1029.8,420.34 L1030.3,420.57 L1030.8,420.81 L1031.3,421.04 L1031.8,421.27 L1032.3,421.49 L1032.8,421.71 L1033.3,421.93 L1033.8,422.14 L1034.3,422.34 L1034.8,422.54 L1035.3,422.74 L1035.8,422.93 L1036.3,423.12 L1036.8,423.29 L1037.3,423.47 L1037.8,423.63 L1038.3,423.79 L1038.8,423.94 L1039.3,424.09 L1039.8,424.22 L1040.3,424.35 L1040.8,424.48 L1041.3,424.59 L1041.8,424.70 L1042.3,424.80 L1042.8,424.89 L1043.3,424.98 L1043.8,425.06 L1044.3,425.13 L1044.8,425.20 L1045.3,425.27 L1045.8,425.33 L1046.3,425.39 L1046.8,425.44 L1047.3,425.49 L1047.8,425.54 L1048.3,425.58 L1048.8,425.63 L1049.3,425.66 L1049.8,425.70 L1050.3,425.74 L1050.8,425.77 L1051.3,425.80 L1051.8,425.83 L1052.3,425.86 L1052.8,425.88 L1053.3,425.91 L1053.8,425.93 L1054.3,425.96 L1054.8,425.98 L1055.3,426.00 L1055.8,426.02 L1056.3,426.05 L1056.8,426.07 L1057.3,426.09 L1057.8,426.12 L1058.3,426.14 L1058.8,426.17 L1059.3,426.20 L1059.8,426.22 L1060.3,426.25 L1060.8,426.28 L1061.3,426.30 L1061.8,426.33 L1062.3,426.35 L1062.8,426.37 L1063.3,426.38 L1063.8,426.40 L1064.3,426.41 L1064.8,426.42 L1065.3,426.42 L1065.8,426.42 L1066.3,426.42 L1066.8,426.41 L1067.3,426.40 L1067.8,426.39 L1068.3,426.37 L1068.8,426.35 L1069.3,426.33 L1069.8,426.30 L1070.3,426.27 L1070.8,426.24 L1071.3,426.21 L1071.8,426.17 L1072.3,426.12 L1072.8,426.08 L1073.3,426.03 L1073.8,425.98 L1074.3,425.92 L1074.8,425.87 L1075.3,425.81 L1075.8,425.75 L1076.3,425.69 L1076.8,425.63 L1077.3,425.57 L1077.8,425.51 L1078.3,425.44 L1078.8,425.38 L1079.3,425.32 L1079.8,425.26 L1080.3,425.20 L1080.8,425.14 L1081.3,425.09 L1081.8,425.03 L1082.3,424.97 L1082.8,424.90 L1083.3,424.84 L1083.8,424.77 L1084.3,424.70 L1084.8,424.64 L1085.3,424.57 L1085.8,424.50 L1086.3,424.43 L1086.8,424.37 L1087.3,424.30 L1087.8,424.24 L1088.3,424.18 L1088.8,424.13 L1089.3,424.08 L1089.8,424.03 L1090.3,424.00 L1090.8,423.97 L1091.3,423.95 L1091.8,423.93 L1092.3,423.93 L1092.8,423.94 L1093.3,423.97 L1093.8,424.00 L1094.3,424.05 L1094.8,424.12 L1095.3,424.19 L1095.8,424.29 L1096.3,424.39 L1096.8,424.51 L1097.3,424.64 L1097.8,424.77 L1098.3,424.91 L1098.8,425.05 L1099.3,425.20 L1099.8,425.35 L1100.3,425.51 L1100.8,425.67 L1101.3,425.85 L1101.8,426.03 L1102.3,426.22 L1102.8,426.41 L1103.3,426.61 L1103.8,426.80 L1104.3,427.00 L1104.8,427.20 L1105.3,427.39 L1105.8,427.58 L1106.3,427.76 L1106.8,427.94 L1107.3,428.11 L1107.8,428.28 L1108.3,428.43 L1108.8,428.58 L1109.3,428.71 L1109.8,428.83 L1110.3,428.94 L1110.8,429.04 L1111.3,429.12 L1111.8,429.19 L1112.3,429.25 L1112.8,429.30 L1113.3,429.33 L1113.8,429.36 L1114.3,429.38 L1114.8,429.39 L1115.3,429.40 L1115.8,429.40 L1116.3,429.40 L1116.8,429.40 L1117.3,429.39 L1117.8,429.38 L1118.3,429.38 L1118.8,429.37 L1119.3,429.36 L1119.8,429.36 L1120.3,429.36 L1120.8,429.36 L1121.3,429.37 L1121.8,429.38 L1122.3,429.40 L1122.8,429.43 L1123.3,429.47 L1123.8,429.52 L1124.3,429.57 L1124.8,429.63 L1125.3,429.70 L1125.8,429.78 L1126.3,429.86 L1126.8,429.94 L1127.3,430.04 L1127.8,430.13 L1128.3,430.24 L1128.8,430.34 L1129.3,430.45 L1129.8,430.56 L1130.3,430.67 L1130.8,430.79 L1131.3,430.91 L1131.8,431.03 L1132.3,431.15 L1132.8,431.26 L1133.3,431.38 L1133.8,431.50 L1134.3,431.62 L1134.8,431.74 L1135.3,431.86 L1135.8,431.98 L1136.3,432.11 L1136.8,432.24 L1137.3,432.37 L1137.8,432.51 L1138.3,432.66 L1138.8,432.80 L1139.3,432.94 L1139.8,433.09 L1140.3,433.23 L1140.8,433.37 L1141.3,433.50 L1141.8,433.62 L1142.3,433.74 L1142.8,433.84 L1143.3,433.93 L1143.8,434.01 L1144.3,434.07 L1144.8,434.12 L1145.3,434.14 L1145.8,434.15 L1146.3,434.13 L1146.8,434.09 L1147.3,434.04 L1147.8,433.97 L1148.3,433.88 L1148.8,433.77 L1149.3,433.65 L1149.8,433.52 L1150.3,433.37 L1150.8,433.22 L1151.3,433.06 L1151.8,432.90 L1152.3,432.73 L1152.8,432.56 L1153.3,432.39 L1153.8,432.22 L1154.3,432.05 L1154.8,431.86 L1155.3,431.68 L1155.8,431.49 L1156.3,431.29 L1156.8,431.08 L1157.3,430.88 L1157.8,430.67 L1158.3,430.46 L1158.8,430.25 L1159.3,430.03 L1159.8,429.83 L1160.3,429.62 L1160.8,429.42 L1161.3,429.22 L1161.8,429.02 L1162.3,428.83 L1162.8,428.65 L1163.3,428.47 L1163.8,428.30 L1164.3,428.12 L1164.8,427.96 L1165.3,427.79 L1165.8,427.63 L1166.3,427.47 L1166.8,427.31 L1167.3,427.16 L1167.8,427.01 L1168.3,426.86 L1168.8,426.71 L1169.3,426.57 L1169.8,426.43 L1170.3,426.30 L1170.8,426.16 L1171.3,426.03 L1171.8,425.90 L1172.3,425.77 L1172.8,425.64 L1173.3,425.51 L1173.8,425.38 L1174.3,425.25 L1174.8,425.12 L1175.3,424.98 L1175.8,424.85 L1176.3,424.72 L1176.8,424.59 L1177.3,424.46 L1177.8,424.34 L1178.3,424.22 L1178.8,424.10 L1179.3,423.99 L1179.8,423.89 L1180.3,423.79 L1180.8,423.69 L1181.3,423.61 L1181.8,423.54 L1182.3,423.47 L1182.8,423.42 L1183.3,423.38 L1183.8,423.35 L1184.3,423.34 L1184.8,423.35 L1185.3,423.36 L1185.8,423.40 L1186.3,423.44 L1186.8,423.51 L1187.3,423.59 L1187.8,423.68 L1188.3,423.79 L1188.8,423.92 L1189.3,424.06 L1189.8,424.22 L1190.3,424.40 L1190.8,424.58 L1191.3,424.78 L1191.8,424.99 L1192.3,425.21 L1192.8,425.45 L1193.3,425.69 L1193.8,425.94 L1194.3,426.21 L1194.8,426.49 L1195.3,426.79 L1195.8,427.10 L1196.3,427.42 L1196.8,427.75 L1197.3,428.10 L1197.8,428.45 L1198.3,428.80 L1198.8,429.16 L1199.3,429.52 L1199.8,429.88 L1200.3,430.24 L1200.8,430.59 L1201.3,430.94 L1201.8,431.29 L1202.3,431.63 L1202.8,431.96 L1203.3,432.28 L1203.8,432.59 L1204.3,432.89 L1204.8,433.17 L1205.3,433.45 L1205.8,433.73 L1206.3,434.00 L1206.8,434.26 L1207.3,434.52 L1207.8,434.77 L1208.3,435.03 L1208.8,435.27 L1209.3,435.51 L1209.8,435.75 L1210.3,435.98 L1210.8,436.20 L1211.3,436.42 L1211.8,436.63 L1212.3,436.82 L1212.8,437.01 L1213.3,437.18 L1213.8,437.34 L1214.3,437.49 L1214.8,437.62 L1215.3,437.73 L1215.8,437.81 L1216.3,437.87 L1216.8,437.91 L1217.3,437.91 L1217.8,437.89 L1218.3,437.83 L1218.8,437.75 L1219.3,437.64 L1219.8,437.50 L1220.3,437.33 L1220.8,437.15 L1221.3,436.94 L1221.8,436.71 L1222.3,436.47 L1222.8,436.21 L1223.3,435.92 L1223.8,435.61 L1224.3,435.26 L1224.8,434.89 L1225.3,434.48 L1225.8,434.05 L1226.3,433.62 L1226.8,433.18 L1227.3,432.77 L1227.8,432.37 L1228.3,432.01 L1228.8,431.67 L1229.3,431.36 L1229.8,431.07 L1230.3,430.80 L1230.8,430.54 L1231.3,430.28 L1231.8,430.04 L1232.3,429.80 L1232.8,429.56 L1233.3,429.34 L1233.8,429.12 L1234.3,428.91 L1234.8,428.71 L1235.3,428.52 L1235.8,428.34 L1236.3,428.18 L1236.8,428.03 L1237.3,427.90 L1237.8,427.79 L1238.3,427.70 L1238.8,427.63 L1239.3,427.59 L1239.8,427.58 L1240.3,427.59 L1240.8,427.64 L1241.3,427.71 L1241.8,427.81 L1242.3,427.94 L1242.8,428.10 L1243.3,428.29 L1243.8,428.50 L1244.3,428.73 L1244.8,428.99 L1245.3,429.25 L1245.8,429.54 L1246.3,429.83 L1246.8,430.13 L1247.3,430.45 L1247.8,430.77 L1248.3,431.10 L1248.8,431.44 L1249.3,431.80 L1249.8,432.17 L1250.3,432.55 L1250.8,432.94 L1251.3,433.35 L1251.8,433.76 L1252.3,434.17 L1252.8,434.59 L1253.3,435.01 L1253.8,435.43 L1254.3,435.86 L1254.8,436.28 L1255.3,436.70 L1255.8,437.11 L1256.3,437.52 L1256.8,437.92 L1257.3,438.31 L1257.8,438.70 L1258.3,439.07 L1258.8,439.43 L1259.3,439.78 L1259.8,440.12 L1260.3,440.45 L1260.8,440.77 L1261.3,441.09 L1261.8,441.40 L1262.3,441.70 L1262.8,441.99 L1263.3,442.28 L1263.8,442.55 L1264.3,442.82 L1264.8,443.08 L1265.3,443.33 L1265.8,443.58 L1266.3,443.81 L1266.8,444.04 L1267.3,444.26 L1267.8,444.47 L1268.3,444.67 L1268.8,444.86 L1269.3,445.04 L1269.8,445.20 L1270.3,445.36 L1270.8,445.51 L1271.3,445.65 L1271.8,445.78 L1272.3,445.91 L1272.8,446.03 L1273.3,446.15 L1273.8,446.27 L1274.3,446.39 L1274.8,446.52 L1275.3,446.64 L1275.8,446.77 L1276.3,446.91 L1276.8,447.06 L1277.3,447.21 L1277.8,447.38 L1278.3,447.56 L1278.8,447.75 L1279.3,447.96 L1279.8,448.18 L1280.3,448.41 L1280.8,448.66 L1281.3,448.93 L1281.8,449.20 L1282.3,449.48 L1282.8,449.78 L1283.3,450.09 L1283.8,450.41 L1284.3,450.74 L1284.8,451.07 L1285.3,451.42 L1285.8,451.77 L1286.3,452.13 L1286.8,452.50 L1287.3,452.87 L1287.8,453.25 L1288.3,453.63 L1288.8,454.02 L1289.3,454.42 L1289.8,454.82 L1290.3,455.23 L1290.8,455.65 L1291.3,456.08 L1291.8,456.52 L1292.3,456.96 L1292.8,457.40 L1293.3,457.85 L1293.8,458.31 L1294.3,458.76 L1294.8,459.21 L1295.3,459.67 L1295.8,460.12 L1296.3,460.56 L1296.8,461.01 L1297.3,461.44 L1297.8,461.87 L1298.3,462.30 L1298.8,462.72 L1299.3,463.13 L1299.8,463.53 L1300.3,463.93 L1300.8,464.33 L1301.3,464.72 L1301.8,465.11 L1302.3,465.49 L1302.8,465.87 L1303.3,466.25 L1303.8,466.62 L1304.3,466.99 L1304.8,467.36 L1305.3,467.72 L1305.8,468.07 L1306.3,468.42 L1306.8,468.77 L1307.3,469.12 L1307.8,469.46 L1308.3,469.79 L1308.8,470.13 L1309.3,470.46 L1309.8,470.79 L1310.3,471.12 L1310.8,471.44 L1311.3,471.77 L1311.8,472.09 L1312.3,472.41 L1312.8,472.72 L1313.3,473.03 L1313.8,473.33 L1314.3,473.63 L1314.8,473.93 L1315.3,474.22 L1315.8,474.50 L1316.3,474.77 L1316.8,475.04 L1317.3,475.30 L1317.8,475.55 L1318.3,475.79 L1318.8,476.03 L1319.3,476.26 L1319.8,476.49 L1320.3,476.72 L1320.8,476.94 L1321.3,477.14 L1321.8,477.34 L1322.3,477.51 L1322.8,477.67 L1323.3,477.81 L1323.8,477.92 L1324.3,478.01 L1324.8,478.08 L1325.3,478.13 L1325.8,478.16 L1326.3,478.17 L1326.8,478.16 L1327.3,478.13 L1327.8,478.09 L1328.3,478.04 L1328.8,477.97 L1329.3,477.90 L1329.8,477.81 L1330.3,477.72 L1330.8,477.62 L1331.3,477.51 L1331.8,477.39 L1332.3,477.27 L1332.8,477.15 L1333.3,477.02 L1333.8,476.89 L1334.3,476.76 L1334.8,476.63 L1335.3,476.49 L1335.8,476.36 L1336.3,476.22 L1336.8,476.08 L1337.3,475.94 L1337.8,475.80 L1338.3,475.67 L1338.8,475.53 L1339.3,475.40 L1339.8,475.26 L1340.3,475.13 L1340.8,475.00 L1341.3,474.87 L1341.8,474.73 L1342.3,474.60 L1342.8,474.46 L1343.3,474.32 L1343.8,474.17 L1344.3,474.03 L1344.8,473.88 L1345.3,473.73 L1345.8,473.59 L1346.3,473.44 L1346.8,473.29 L1347.3,473.14 L1347.8,472.99 L1348.3,472.84 L1348.8,472.69 L1349.3,472.55 L1349.8,472.40 L1350.3,472.26 L1350.8,472.12 L1351.3,471.99 L1351.8,471.86 L1352.3,471.73 L1352.8,471.62 L1353.3,471.51 L1353.8,471.41 L1354.3,471.32 L1354.8,471.25 L1355.3,471.19 L1355.8,471.16 L1356.3,471.16 L1356.8,471.19 L1357.3,471.27 L1357.8,471.39 L1358.3,471.56 L1358.8,471.78 L1359.3,472.03 L1359.8,472.32 L1360.3,472.63 L1360.8,472.97 L1361.3,473.35 L1361.8,473.76 L1362.3,474.23 L1362.8,474.75 L1363.3,475.34 L1363.8,476.01 L1364.3,476.75 L1364.8,477.57 L1365.3,478.48 L1365.8,479.46 L1366.3,480.51 L1366.8,481.64 L1367.3,482.83 L1367.8,484.10 L1368.3,485.43 L1368.8,486.84 L1369.3,488.31 L1369.8,489.86 L1370.3,491.48 L1370.8,493.17 L1371.3,494.93 L1371.8,496.74 L1372.3,498.62 L1372.8,500.54 L1373.3,502.51 L1373.8,504.52 L1374.3,506.58 L1374.8,508.68 L1375.3,510.82 L1375.8,513.00 L1376.3,515.22 L1376.8,517.47 L1377.3,519.74 L1377.8,522.03 L1378.3,524.35 L1378.8,526.69 L1379.3,529.05 L1379.8,531.43 L1380.3,533.81 L1380.8,536.18 L1381.3,538.51 L1381.8,540.79 L1382.3,542.98 L1382.8,545.07 L1383.3,547.03 L1383.8,548.83 L1384.3,550.44 L1384.8,551.84 L1385.3,553.02 L1385.8,553.98 L1386.3,554.72 L1386.8,555.25 L1387.3,555.58 L1387.8,555.71 L1388.3,555.67 L1388.8,555.45 L1389.3,555.09 L1389.8,554.61 L1390.3,554.03 L1390.8,553.38 L1391.3,552.68 L1391.8,551.95 L1392.3,551.20 L1392.8,550.43 L1393.3,549.64 L1393.8,548.83 L1394.3,548.00 L1394.8,547.17 L1395.3,546.34 L1395.8,545.51 L1396.3,544.71 L1396.8,543.92 L1397.3,543.17 L1397.8,542.45 L1398.3,541.77 L1398.8,541.13 L1399.3,540.52 L1399.8,539.95 L1400.3,539.40 L1400.8,538.88 L1401.3,538.38 L1401.8,537.90 L1402.3,537.45 L1402.8,537.02 L1403.3,536.62 L1403.8,536.26 L1404.3,535.93 L1404.8,535.64 L1405.3,535.41 L1405.8,535.22 L1406.3,535.10 L1406.8,535.05 L1407.3,535.06 L1407.8,535.16 L1408.3,535.33 L1408.8,535.57 L1409.3,535.87 L1409.8,536.23 L1410.3,536.64 L1410.8,537.09 L1411.3,537.56 L1411.8,538.07 L1412.3,538.60 L1412.8,539.16 L1413.3,539.74 L1413.8,540.36 L1414.3,541.00 L1414.8,541.66 L1415.3,542.34 L1415.8,543.03 L1416.3,543.72 L1416.8,544.42 L1417.3,545.11 L1417.8,545.81 L1418.3,546.50 L1418.8,547.19 L1419.3,547.88 L1419.8,548.58 L1420.3,549.28 L1420.8,549.98 L1421.3,550.68 L1421.8,551.37 L1422.3,552.06 L1422.8,552.73 L1423.3,553.39 L1423.8,554.03 L1424.3,554.63 L1424.8,555.21 L1425.3,555.74 L1425.8,556.22 L1426.3,556.64 L1426.8,556.97 L1427.3,557.20 L1427.8,557.34 L1428.3,557.38 L1428.8,557.33 L1429.3,557.21 L1429.8,557.02 L1430.3,556.77 L1430.8,556.48 L1431.3,556.14 L1431.8,555.78 L1432.3,555.40 L1432.8,554.99 L1433.3,554.57 L1433.8,554.13 L1434.3,553.68 L1434.8,553.21 L1435.3,552.73 L1435.8,552.24 L1436.3,551.74 L1436.8,551.23 L1437.3,550.71 L1437.8,550.18 L1438.3,549.66 L1438.8,549.13 L1439.3,548.61 L1439.8,548.09 L1440.3,547.57 L1440.8,547.06 L1441.3,546.55 L1441.8,546.06 L1442.3,545.57 L1442.8,545.09 L1443.3,544.63 L1443.8,544.17 L1444.3,543.72 L1444.8,543.27 L1445.3,542.83 L1445.8,542.40 L1446.3,541.97 L1446.8,541.55 L1447.3,541.13 L1447.8,540.72 L1448.3,540.31 L1448.8,539.91 L1449.3,539.52 L1449.8,539.14 L1450.3,538.77 L1450.8,538.42 L1451.3,538.07 L1451.8,537.74 L1452.3,537.43 L1452.8,537.13 L1453.3,536.85 L1453.8,536.58 L1454.3,536.33 L1454.8,536.11 L1455.3,535.90 L1455.8,535.72 L1456.3,535.56 L1456.8,535.43 L1457.3,535.32 L1457.8,535.24 L1458.3,535.19 L1458.8,535.17 L1459.3,535.18 L1459.8,535.22 L1460.3,535.30 L1460.8,535.41 L1461.3,535.55 L1461.8,535.73 L1462.3,535.94 L1462.8,536.17 L1463.3,536.43 L1463.8,536.70 L1464.3,536.99 L1464.8,537.28 L1465.3,537.59 L1465.8,537.90 L1466.3,538.23 L1466.8,538.58 L1467.3,538.93 L1467.8,539.30 L1468.3,539.68 L1468.8,540.07 L1469.3,540.46 L1469.8,540.86 L1470.3,541.26 L1470.8,541.65 L1471.3,542.04 L1471.8,542.42 L1472.3,542.80 L1472.8,543.17 L1473.3,543.52 L1473.8,543.86 L1474.3,544.18 L1474.8,544.48 L1475.3,544.76 L1475.8,545.00 L1476.3,545.21 L1476.8,545.38 L1477.3,545.50 L1477.8,545.57 L1478.3,545.59 L1478.8,545.55 L1479.3,545.45 L1479.8,545.28 L1480.3,545.06 L1480.8,544.78 L1481.3,544.45 L1481.8,544.08 L1482.3,543.68 L1482.8,543.25 L1483.3,542.81 L1483.8,542.37 L1484.3,541.94 L1484.8,541.51 L1485.3,541.10 L1485.8,540.68 L1486.3,540.27 L1486.8,539.86 L1487.3,539.43 L1487.8,539.00 L1488.3,538.56 L1488.8,538.12 L1489.3,537.67 L1489.8,537.22 L1490.3,536.76 L1490.8,536.31 L1491.3,535.86 L1491.8,535.42 L1492.3,534.98 L1492.8,534.55 L1493.3,534.12 L1493.8,533.71 L1494.3,533.31 L1494.8,532.93 L1495.3,532.55 L1495.8,532.19 L1496.3,531.84 L1496.8,531.49 L1497.3,531.15 L1497.8,530.83 L1498.3,530.50 L1498.8,530.19 L1499.3,529.89 L1499.8,529.60 L1500.3,529.33 L1500.8,529.08 L1501.3,528.85 L1501.8,528.65 L1502.3,528.47 L1502.8,528.33 L1503.3,528.22 L1503.8,528.16 L1504.3,528.14 L1504.8,528.17 L1505.3,528.26 L1505.8,528.39 L1506.3,528.58 L1506.8,528.82 L1507.3,529.12 L1507.8,529.48 L1508.3,529.89 L1508.8,530.35 L1509.3,530.87 L1509.8,531.45 L1510.3,532.09 L1510.8,532.79 L1511.3,533.57 L1511.8,534.44 L1512.3,535.39 L1512.8,536.43 L1513.3,537.55 L1513.8,538.73 L1514.3,539.98 L1514.8,541.28 L1515.3,542.64 L1515.8,544.03 L1516.3,545.48 L1516.8,546.96 L1517.3,548.48 L1517.8,550.03 L1518.3,551.57 L1518.8,553.11 L1519.3,554.63 L1519.8,556.11 L1520.3,557.55 L1520.8,558.93 L1521.3,560.27 L1521.8,561.54 L1522.3,562.77 L1522.8,563.94 L1523.3,565.05 L1523.8,566.09 L1524.3,567.06 L1524.8,567.94 L1525.3,568.72 L1525.8,569.41 L1526.3,569.99 L1526.8,570.45 L1527.3,570.80 L1527.8,571.03 L1528.3,571.16 L1528.8,571.19 L1529.3,571.14 L1529.8,571.02 L1530.3,570.83 L1530.8,570.58 L1531.3,570.29 L1531.8,569.97 L1532.3,569.63 L1532.8,569.28 L1533.3,568.93 L1533.8,568.60 L1534.3,568.29 L1534.8,568.02 L1535.3,567.81 L1535.8,567.65 L1536.3,567.58 L1536.8,567.59 L1537.3,567.69 L1537.8,567.89 L1538.3,568.17 L1538.8,568.56 L1539.3,569.04 L1539.8,569.61 L1540.3,570.27 L1540.8,571.02 L1541.3,571.86 L1541.8,572.79 L1542.3,573.84 L1542.8,574.99 L1543.3,576.27 L1543.8,577.66 L1544.3,579.18 L1544.8,580.81 L1545.3,582.56 L1545.8,584.43 L1546.3,586.41 L1546.8,588.52 L1547.3,590.75 L1547.8,593.12 L1548.3,595.62 L1548.8,598.26 L1549.3,601.03 L1549.8,603.93 L1550.3,606.93 L1550.8,610.02 L1551.3,613.17 L1551.8,616.34 L1552.3,619.50 L1552.8,622.63 L1553.3,625.69 L1553.8,628.67 L1554.3,631.54 L1554.8,634.31 L1555.3,636.97 L1555.8,639.55 L1556.3,642.07 L1556.8,644.54 L1557.3,646.98 L1557.8,649.44 L1558.3,651.92 L1558.8,654.47 L1559.3,657.10 L1559.8,659.83 L1560.3,662.65 L1560.8,665.54 L1561.3,668.46 L1561.8,671.35 L1562.3,674.14 L1562.8,676.80 L1563.3,679.28 L1563.8,681.58 L1564.3,683.68 L1564.8,685.59 L1565.3,687.32 L1565.8,688.89 L1566.3,690.29 L1566.8,691.55 L1567.3,692.67 L1567.8,693.66 L1568.3,694.55 L1568.8,695.33 L1569.3,696.03 L1569.8,696.63 L1570.3,697.15 L1570.8,697.59 L1571.3,697.96 L1571.8,698.24 L1572.3,698.46 L1572.8,698.61 L1573.3,698.69 L1573.8,698.71 L1574.3,698.68 L1574.8,698.60 L1575.3,698.47 L1575.8,698.31 L1576.3,698.11 L1576.8,697.88 L1577.3,697.62 L1577.8,697.34 L1578.3,697.02 L1578.8,696.68 L1579.3,696.31 L1579.8,695.90 L1580.3,695.45 L1580.8,694.97 L1581.3,694.45 L1581.8,693.89 L1582.3,693.30 L1582.8,692.68 L1583.3,692.04 L1583.8,691.37 L1584.3,690.67 L1584.8,689.93 L1585.3,689.16 L1585.8,688.35 L1586.3,687.51 L1586.8,686.64 L1587.3,685.75 L1587.8,684.86 L1588.3,683.98 L1588.8,683.12 L1589.3,682.30 L1589.8,681.55 L1590.3,680.88 L1590.8,680.31 L1591.3,679.88 L1591.8,679.60 L1592.3,679.50 L1592.8,679.58 L1593.3,679.87 L1593.8,680.36 L1594.3,681.05 L1594.8,681.93 L1595.3,682.98 L1595.8,684.21 L1596.3,685.61 L1596.8,687.17 L1597.3,688.92 L1597.8,690.84 L1598.3,692.96 L1598.8,695.26 L1599.3,697.73 L1599.8,700.39 L1600.3,703.22 L1600.8,706.19 L1601.3,709.28 L1601.8,712.44 L1602.3,715.61 L1602.8,718.76 L1603.3,721.82 L1603.8,724.76 L1604.3,727.55 L1604.8,730.17 L1605.3,732.62 L1605.8,734.92 L1606.3,737.08 L1606.8,739.13 L1607.3,741.09 L1607.8,742.97 L1608.3,744.80 L1608.8,746.59 L1609.3,748.35 L1609.8,750.10 L1610.3,751.84 L1610.8,753.59 L1611.3,755.35 L1611.8,757.13 L1612.3,758.93 L1612.8,760.74 L1613.3,762.56 L1613.8,764.37 L1614.3,766.16 L1614.8,767.93 L1615.3,769.65 L1615.8,771.31 L1616.3,772.91 L1616.8,774.42 L1617.3,775.85 L1617.8,777.18 L1618.3,778.41 L1618.8,779.55 L1619.3,780.62 L1619.8,781.62 L1620.3,782.58 L1620.8,783.51 L1621.3,784.44 L1621.8,785.39 L1622.3,786.36 L1622.8,787.36 L1623.3,788.41 L1623.8,789.50 L1624.3,790.62 L1624.8,791.78 L1625.3,792.98 L1625.8,794.25 L1626.3,795.60 L1626.8,797.05 L1627.3,798.60 L1627.8,800.28 L1628.3,802.08 L1628.8,804.00 L1629.3,806.03 L1629.8,808.17 L1630.3,810.39 L1630.8,812.68 L1631.3,815.03 L1631.8,817.43 L1632.3,819.86 L1632.8,822.31 L1633.3,824.78 L1633.8,827.28 L1634.3,829.79 L1634.8,832.34 L1635.3,834.91 L1635.8,837.52 L1636.3,840.14 L1636.8,842.76 L1637.3,845.36 L1637.8,847.91 L1638.3,850.38 L1638.8,852.75 L1639.3,855.00 L1639.8,857.13 L1640.3,859.13 L1640.8,861.03 L1641.3,862.86 L1641.8,864.67 L1642.3,866.48 L1642.8,868.32 L1643.3,870.22 L1643.8,872.18 L1644.3,874.19 L1644.8,876.25 L1645.3,878.33 L1645.8,880.42 L1646.3,882.49 L1646.8,884.47 L1647.3,886.30 L1647.8,887.88 L1648.3,889.13" stroke="#a05217" stroke-width="3"/>
<path d="M315.2,890.0 C315.5,888.3 315.4,885.8 317.0,880.0 C318.6,874.2 321.3,865.2 324.6,855.0 C327.9,844.8 333.5,828.7 336.9,818.8 C340.2,808.9 342.1,802.5 344.7,795.4 C347.3,788.3 349.4,782.3 352.4,776.0 C355.4,769.7 359.8,762.3 362.8,757.8 C365.8,753.2 367.8,750.9 370.6,748.7 C373.4,746.6 376.4,744.8 379.7,744.9 C383.0,745.0 387.3,746.5 390.7,749.6 C394.1,752.8 397.0,757.5 400.2,763.8 C403.4,770.1 406.7,778.7 409.6,787.4 C412.5,796.1 414.9,805.8 417.5,815.8 C420.1,825.8 422.8,835.8 425.4,847.3 C428.0,858.8 431.8,877.5 433.3,885.0 C434.8,892.5 434.3,890.8 434.5,892.0" stroke="#f0a000" stroke-width="3"/>
<path d="M289.5,847.66 L290.0,847.20 L290.5,846.65 L291.0,846.01 L291.5,845.30 L292.0,844.56 L292.5,843.79 L293.0,843.01 L293.5,842.23 L294.0,841.45 L294.5,840.69 L295.0,839.93 L295.5,839.19 L296.0,838.46 L296.5,837.74 L297.0,837.03 L297.5,836.33 L298.0,835.65 L298.5,834.98 L299.0,834.31 L299.5,833.65 L300.0,833.00 L300.5,832.36 L301.0,831.72 L301.5,831.09 L302.0,830.46 L302.5,829.84 L303.0,829.22 L303.5,828.60 L304.0,828.00 L304.5,827.39 L305.0,826.79 L305.5,826.19 L306.0,825.60 L306.5,825.02 L307.0,824.44 L307.5,823.87 L308.0,823.30 L308.5,822.74 L309.0,822.18 L309.5,821.63 L310.0,821.09 L310.5,820.55 L311.0,820.02 L311.5,819.50 L312.0,818.98 L312.5,818.47 L313.0,817.96 L313.5,817.46 L314.0,816.97 L314.5,816.48 L315.0,815.99 L315.5,815.51 L316.0,815.04 L316.5,814.57 L317.0,814.11 L317.5,813.66 L318.0,813.21 L318.5,812.77 L319.0,812.33 L319.5,811.90 L320.0,811.48 L320.5,811.07 L321.0,810.66 L321.5,810.26 L322.0,809.86 L322.5,809.48 L323.0,809.10 L323.5,808.73 L324.0,808.37 L324.5,808.02 L325.0,807.67 L325.5,807.34 L326.0,807.01 L326.5,806.69 L327.0,806.38 L327.5,806.08 L328.0,805.79 L328.5,805.50 L329.0,805.22 L329.5,804.95 L330.0,804.68 L330.5,804.41 L331.0,804.15 L331.5,803.90 L332.0,803.65 L332.5,803.40 L333.0,803.16 L333.5,802.91 L334.0,802.67 L334.5,802.44 L335.0,802.20 L335.5,801.96 L336.0,801.72 L336.5,801.49 L337.0,801.25 L337.5,801.02 L338.0,800.79 L338.5,800.55 L339.0,800.32 L339.5,800.09 L340.0,799.86 L340.5,799.64 L341.0,799.41 L341.5,799.19 L342.0,798.98 L342.5,798.76 L343.0,798.55 L343.5,798.34 L344.0,798.14 L344.5,797.94 L345.0,797.74 L345.5,797.55 L346.0,797.37 L346.5,797.19 L347.0,797.02 L347.5,796.85 L348.0,796.69 L348.5,796.53 L349.0,796.38 L349.5,796.24 L350.0,796.10 L350.5,795.97 L351.0,795.84 L351.5,795.72 L352.0,795.60 L352.5,795.49 L353.0,795.38 L353.5,795.28 L354.0,795.19 L354.5,795.10 L355.0,795.01 L355.5,794.93 L356.0,794.86 L356.5,794.79 L357.0,794.72 L357.5,794.67 L358.0,794.61 L358.5,794.57 L359.0,794.53 L359.5,794.49 L360.0,794.47 L360.5,794.45 L361.0,794.43 L361.5,794.42 L362.0,794.42 L362.5,794.42 L363.0,794.43 L363.5,794.45 L364.0,794.47 L364.5,794.49 L365.0,794.52 L365.5,794.56 L366.0,794.60 L366.5,794.65 L367.0,794.71 L367.5,794.77 L368.0,794.83 L368.5,794.91 L369.0,794.99 L369.5,795.07 L370.0,795.17 L370.5,795.27 L371.0,795.37 L371.5,795.49 L372.0,795.61 L372.5,795.73 L373.0,795.87 L373.5,796.00 L374.0,796.15 L374.5,796.30 L375.0,796.46 L375.5,796.63 L376.0,796.80 L376.5,796.98 L377.0,797.17 L377.5,797.37 L378.0,797.57 L378.5,797.77 L379.0,797.99 L379.5,798.21 L380.0,798.43 L380.5,798.66 L381.0,798.90 L381.5,799.14 L382.0,799.38 L382.5,799.63 L383.0,799.88 L383.5,800.14 L384.0,800.40 L384.5,800.66 L385.0,800.92 L385.5,801.18 L386.0,801.45 L386.5,801.72 L387.0,801.99 L387.5,802.26 L388.0,802.53 L388.5,802.80 L389.0,803.07 L389.5,803.35 L390.0,803.62 L390.5,803.89 L391.0,804.16 L391.5,804.44 L392.0,804.71 L392.5,804.99 L393.0,805.26 L393.5,805.54 L394.0,805.82 L394.5,806.10 L395.0,806.38 L395.5,806.66 L396.0,806.94 L396.5,807.23 L397.0,807.51 L397.5,807.80 L398.0,808.09 L398.5,808.38 L399.0,808.67 L399.5,808.97 L400.0,809.27 L400.5,809.57 L401.0,809.87 L401.5,810.17 L402.0,810.48 L402.5,810.79 L403.0,811.11 L403.5,811.43 L404.0,811.75 L404.5,812.08 L405.0,812.41 L405.5,812.74 L406.0,813.09 L406.5,813.44 L407.0,813.80 L407.5,814.16 L408.0,814.54 L408.5,814.92 L409.0,815.32 L409.5,815.72 L410.0,816.13 L410.5,816.54 L411.0,816.97 L411.5,817.40 L412.0,817.83 L412.5,818.26 L413.0,818.70 L413.5,819.14 L414.0,819.57 L414.5,820.01 L415.0,820.44 L415.5,820.86 L416.0,821.28 L416.5,821.69 L417.0,822.09 L417.5,822.48 L418.0,822.86 L418.5,823.23 L419.0,823.59 L419.5,823.94 L420.0,824.28 L420.5,824.62 L421.0,824.95 L421.5,825.28 L422.0,825.59 L422.5,825.91 L423.0,826.22 L423.5,826.52 L424.0,826.82 L424.5,827.11 L425.0,827.40 L425.5,827.68 L426.0,827.95 L426.5,828.22 L427.0,828.49 L427.5,828.74 L428.0,829.00 L428.5,829.24 L429.0,829.48 L429.5,829.71 L430.0,829.94 L430.5,830.16 L431.0,830.38 L431.5,830.58 L432.0,830.78 L432.5,830.97 L433.0,831.15 L433.5,831.33 L434.0,831.49 L434.5,831.65 L435.0,831.81 L435.5,831.95 L436.0,832.09 L436.5,832.23 L437.0,832.36 L437.5,832.49 L438.0,832.62 L438.5,832.74 L439.0,832.86 L439.5,832.98 L440.0,833.11 L440.5,833.23 L441.0,833.35 L441.5,833.47 L442.0,833.60 L442.5,833.73 L443.0,833.86 L443.5,834.00 L444.0,834.14 L444.5,834.28 L445.0,834.43 L445.5,834.58 L446.0,834.73 L446.5,834.89 L447.0,835.04 L447.5,835.19 L448.0,835.34 L448.5,835.49 L449.0,835.64 L449.5,835.79 L450.0,835.94 L450.5,836.10 L451.0,836.27 L451.5,836.44 L452.0,836.63 L452.5,836.84 L453.0,837.06 L453.5,837.30 L454.0,837.56 L454.5,837.84 L455.0,838.14 L455.5,838.47 L456.0,838.82 L456.5,839.19 L457.0,839.59 L457.5,840.01 L458.0,840.45 L458.5,840.92 L459.0,841.40 L459.5,841.90 L460.0,842.42 L460.5,842.95 L461.0,843.49 L461.5,844.04 L462.0,844.61 L462.5,845.18 L463.0,845.76 L463.5,846.35 L464.0,846.95 L464.5,847.55 L465.0,848.15 L465.5,848.75 L466.0,849.36 L466.5,849.97 L467.0,850.58 L467.5,851.19 L468.0,851.79 L468.5,852.40 L469.0,853.00 L469.5,853.59 L470.0,854.19 L470.5,854.78 L471.0,855.38 L471.5,855.97 L472.0,856.56 L472.5,857.16 L473.0,857.76 L473.5,858.36 L474.0,858.97 L474.5,859.57 L475.0,860.18 L475.5,860.79 L476.0,861.41 L476.5,862.02 L477.0,862.63 L477.5,863.24 L478.0,863.86 L478.5,864.48 L479.0,865.11 L479.5,865.74 L480.0,866.38 L480.5,867.02 L481.0,867.67 L481.5,868.32 L482.0,868.97 L482.5,869.61 L483.0,870.25 L483.5,870.87 L484.0,871.48 L484.5,872.07 L485.0,872.65 L485.5,873.20 L486.0,873.74 L486.5,874.26 L487.0,874.76 L487.5,875.25 L488.0,875.73 L488.5,876.20 L489.0,876.67 L489.5,877.13 L490.0,877.59 L490.5,878.04 L491.0,878.49 L491.5,878.93 L492.0,879.36 L492.5,879.79 L493.0,880.21 L493.5,880.62 L494.0,881.02 L494.5,881.41 L495.0,881.78 L495.5,882.15 L496.0,882.49 L496.5,882.82 L497.0,883.13 L497.5,883.41 L498.0,883.67 L498.5,883.91 L499.0,884.11 L499.5,884.29 L500.0,884.42 L500.5,884.52 L501.0,884.59 L501.5,884.61 L502.0,884.60 L502.5,884.54 L503.0,884.44 L503.5,884.29 L504.0,884.10 L504.5,883.86 L505.0,883.57 L505.5,883.24 L506.0,882.86 L506.5,882.44 L507.0,881.99 L507.5,881.50 L508.0,880.97 L508.5,880.42 L509.0,879.84 L509.5,879.24 L510.0,878.60 L510.5,877.94 L511.0,877.26 L511.5,876.54 L512.0,875.80 L512.5,875.03 L513.0,874.23 L513.5,873.41 L514.0,872.57 L514.5,871.72 L515.0,870.84 L515.5,869.96 L516.0,869.07 L516.5,868.16 L517.0,867.26 L517.5,866.34 L518.0,865.43 L518.5,864.51 L519.0,863.60 L519.5,862.69 L520.0,861.78 L520.5,860.89 L521.0,860.00 L521.5,859.12 L522.0,858.24 L522.5,857.38 L523.0,856.51 L523.5,855.65 L524.0,854.79 L524.5,853.93 L525.0,853.07 L525.5,852.22 L526.0,851.37 L526.5,850.54 L527.0,849.72 L527.5,848.91 L528.0,848.13 L528.5,847.37 L529.0,846.63 L529.5,845.91 L530.0,845.21 L530.5,844.52 L531.0,843.85 L531.5,843.19 L532.0,842.54 L532.5,841.90 L533.0,841.26 L533.5,840.63 L534.0,840.01 L534.5,839.39 L535.0,838.77 L535.5,838.16 L536.0,837.55 L536.5,836.95 L537.0,836.35 L537.5,835.76 L538.0,835.17 L538.5,834.59 L539.0,834.02 L539.5,833.45 L540.0,832.89 L540.5,832.34 L541.0,831.79 L541.5,831.26 L542.0,830.73 L542.5,830.22 L543.0,829.73 L543.5,829.25 L544.0,828.80 L544.5,828.37 L545.0,827.97 L545.5,827.60 L546.0,827.28 L546.5,827.02 L547.0,826.83 L547.5,826.71 L548.0,826.68 L548.5,826.75 L549.0,826.91 L549.5,827.17 L550.0,827.51 L550.5,827.91 L551.0,828.36 L551.5,828.85 L552.0,829.36 L552.5,829.89 L553.0,830.45 L553.5,831.02 L554.0,831.63 L554.5,832.25 L555.0,832.89 L555.5,833.54 L556.0,834.20 L556.5,834.86 L557.0,835.51 L557.5,836.16 L558.0,836.78 L558.5,837.39 L559.0,837.98 L559.5,838.53 L560.0,839.06 L560.5,839.56 L561.0,840.03 L561.5,840.47 L562.0,840.88 L562.5,841.27 L563.0,841.63 L563.5,841.98 L564.0,842.31 L564.5,842.63 L565.0,842.93 L565.5,843.22 L566.0,843.50 L566.5,843.77 L567.0,844.04 L567.5,844.29 L568.0,844.54 L568.5,844.79 L569.0,845.03 L569.5,845.27 L570.0,845.50 L570.5,845.73 L571.0,845.96 L571.5,846.19 L572.0,846.42 L572.5,846.64 L573.0,846.87 L573.5,847.10 L574.0,847.32 L574.5,847.54 L575.0,847.77 L575.5,847.98 L576.0,848.20 L576.5,848.41 L577.0,848.62 L577.5,848.82 L578.0,849.02 L578.5,849.21 L579.0,849.41 L579.5,849.60 L580.0,849.78 L580.5,849.97 L581.0,850.16 L581.5,850.34 L582.0,850.52 L582.5,850.71 L583.0,850.90 L583.5,851.08 L584.0,851.28 L584.5,851.47 L585.0,851.67 L585.5,851.87 L586.0,852.08 L586.5,852.29 L587.0,852.51 L587.5,852.73 L588.0,852.96 L588.5,853.19 L589.0,853.43 L589.5,853.67 L590.0,853.91 L590.5,854.16 L591.0,854.42 L591.5,854.68 L592.0,854.96 L592.5,855.24 L593.0,855.54 L593.5,855.86 L594.0,856.19 L594.5,856.55 L595.0,856.92 L595.5,857.33 L596.0,857.76 L596.5,858.21 L597.0,858.70 L597.5,859.21 L598.0,859.77 L598.5,860.36 L599.0,861.00 L599.5,861.69 L600.0,862.43 L600.5,863.24 L601.0,864.11 L601.5,865.04 L602.0,866.04 L602.5,867.10 L603.0,868.23 L603.5,869.42 L604.0,870.66 L604.5,871.96 L605.0,873.29 L605.5,874.67 L606.0,876.08 L606.5,877.51 L607.0,878.96 L607.5,880.41 L608.0,881.85 L608.5,883.26 L609.0,884.60 L609.5,885.82 L610.0,886.89 L610.5,887.78" stroke="#cc0808" stroke-width="3"/>
<path d="M289.5,840.63 L290.0,840.22 L290.5,839.71 L291.0,839.12 L291.5,838.47 L292.0,837.78 L292.5,837.07 L293.0,836.35 L293.5,835.62 L294.0,834.89 L294.5,834.16 L295.0,833.43 L295.5,832.71 L296.0,831.98 L296.5,831.26 L297.0,830.54 L297.5,829.83 L298.0,829.11 L298.5,828.40 L299.0,827.70 L299.5,826.99 L300.0,826.29 L300.5,825.59 L301.0,824.89 L301.5,824.20 L302.0,823.50 L302.5,822.81 L303.0,822.11 L303.5,821.42 L304.0,820.73 L304.5,820.03 L305.0,819.34 L305.5,818.64 L306.0,817.94 L306.5,817.24 L307.0,816.54 L307.5,815.84 L308.0,815.13 L308.5,814.42 L309.0,813.71 L309.5,813.00 L310.0,812.28 L310.5,811.56 L311.0,810.84 L311.5,810.12 L312.0,809.39 L312.5,808.66 L313.0,807.93 L313.5,807.19 L314.0,806.45 L314.5,805.72 L315.0,804.97 L315.5,804.23 L316.0,803.49 L316.5,802.74 L317.0,801.99 L317.5,801.24 L318.0,800.49 L318.5,799.74 L319.0,798.98 L319.5,798.23 L320.0,797.47 L320.5,796.71 L321.0,795.95 L321.5,795.18 L322.0,794.42 L322.5,793.65 L323.0,792.88 L323.5,792.11 L324.0,791.33 L324.5,790.56 L325.0,789.78 L325.5,789.00 L326.0,788.22 L326.5,787.43 L327.0,786.64 L327.5,785.85 L328.0,785.06 L328.5,784.27 L329.0,783.47 L329.5,782.68 L330.0,781.88 L330.5,781.08 L331.0,780.28 L331.5,779.48 L332.0,778.67 L332.5,777.87 L333.0,777.07 L333.5,776.26 L334.0,775.46 L334.5,774.66 L335.0,773.85 L335.5,773.05 L336.0,772.24 L336.5,771.44 L337.0,770.63 L337.5,769.83 L338.0,769.02 L338.5,768.21 L339.0,767.39 L339.5,766.58 L340.0,765.76 L340.5,764.95 L341.0,764.13 L341.5,763.31 L342.0,762.49 L342.5,761.67 L343.0,760.85 L343.5,760.04 L344.0,759.22 L344.5,758.41 L345.0,757.59 L345.5,756.78 L346.0,755.97 L346.5,755.17 L347.0,754.37 L347.5,753.57 L348.0,752.78 L348.5,752.00 L349.0,751.22 L349.5,750.44 L350.0,749.67 L350.5,748.90 L351.0,748.14 L351.5,747.38 L352.0,746.63 L352.5,745.87 L353.0,745.13 L353.5,744.39 L354.0,743.65 L354.5,742.92 L355.0,742.20 L355.5,741.49 L356.0,740.78 L356.5,740.08 L357.0,739.39 L357.5,738.72 L358.0,738.05 L358.5,737.39 L359.0,736.75 L359.5,736.12 L360.0,735.49 L360.5,734.88 L361.0,734.28 L361.5,733.69 L362.0,733.12 L362.5,732.55 L363.0,731.99 L363.5,731.45 L364.0,730.93 L364.5,730.41 L365.0,729.92 L365.5,729.44 L366.0,728.97 L366.5,728.53 L367.0,728.10 L367.5,727.69 L368.0,727.30 L368.5,726.93 L369.0,726.58 L369.5,726.25 L370.0,725.93 L370.5,725.63 L371.0,725.34 L371.5,725.07 L372.0,724.81 L372.5,724.57 L373.0,724.34 L373.5,724.13 L374.0,723.93 L374.5,723.75 L375.0,723.58 L375.5,723.43 L376.0,723.29 L376.5,723.16 L377.0,723.06 L377.5,722.97 L378.0,722.89 L378.5,722.84 L379.0,722.80 L379.5,722.78 L380.0,722.78 L380.5,722.80 L381.0,722.84 L381.5,722.90 L382.0,722.98 L382.5,723.08 L383.0,723.20 L383.5,723.34 L384.0,723.49 L384.5,723.66 L385.0,723.85 L385.5,724.05 L386.0,724.27 L386.5,724.50 L387.0,724.75 L387.5,725.01 L388.0,725.29 L388.5,725.58 L389.0,725.88 L389.5,726.20 L390.0,726.54 L390.5,726.89 L391.0,727.26 L391.5,727.65 L392.0,728.05 L392.5,728.48 L393.0,728.93 L393.5,729.40 L394.0,729.89 L394.5,730.40 L395.0,730.93 L395.5,731.48 L396.0,732.05 L396.5,732.63 L397.0,733.23 L397.5,733.85 L398.0,734.49 L398.5,735.13 L399.0,735.79 L399.5,736.47 L400.0,737.16 L400.5,737.86 L401.0,738.58 L401.5,739.31 L402.0,740.06 L402.5,740.83 L403.0,741.61 L403.5,742.40 L404.0,743.22 L404.5,744.06 L405.0,744.91 L405.5,745.79 L406.0,746.70 L406.5,747.62 L407.0,748.58 L407.5,749.56 L408.0,750.56 L408.5,751.60 L409.0,752.65 L409.5,753.74 L410.0,754.84 L410.5,755.95 L411.0,757.09 L411.5,758.24 L412.0,759.39 L412.5,760.56 L413.0,761.73 L413.5,762.90 L414.0,764.07 L414.5,765.24 L415.0,766.40 L415.5,767.57 L416.0,768.73 L416.5,769.90 L417.0,771.06 L417.5,772.23 L418.0,773.41 L418.5,774.58 L419.0,775.77 L419.5,776.95 L420.0,778.13 L420.5,779.31 L421.0,780.49 L421.5,781.67 L422.0,782.84 L422.5,784.00 L423.0,785.16 L423.5,786.30 L424.0,787.44 L424.5,788.56 L425.0,789.67 L425.5,790.77 L426.0,791.86 L426.5,792.95 L427.0,794.02 L427.5,795.09 L428.0,796.15 L428.5,797.20 L429.0,798.24 L429.5,799.27 L430.0,800.29 L430.5,801.30 L431.0,802.30 L431.5,803.29 L432.0,804.26 L432.5,805.22 L433.0,806.16 L433.5,807.09 L434.0,808.01 L434.5,808.91 L435.0,809.79 L435.5,810.66 L436.0,811.52 L436.5,812.37 L437.0,813.20 L437.5,814.02 L438.0,814.82 L438.5,815.61 L439.0,816.39 L439.5,817.15 L440.0,817.89 L440.5,818.62 L441.0,819.33 L441.5,820.02 L442.0,820.70 L442.5,821.36 L443.0,822.01 L443.5,822.65 L444.0,823.26 L444.5,823.86 L445.0,824.45 L445.5,825.02 L446.0,825.57 L446.5,826.11 L447.0,826.64 L447.5,827.16 L448.0,827.67 L448.5,828.16 L449.0,828.65 L449.5,829.14 L450.0,829.62 L450.5,830.10 L451.0,830.57 L451.5,831.04 L452.0,831.52 L452.5,831.99 L453.0,832.46 L453.5,832.94 L454.0,833.42 L454.5,833.91 L455.0,834.40 L455.5,834.90 L456.0,835.40 L456.5,835.91 L457.0,836.43 L457.5,836.95 L458.0,837.47 L458.5,838.00 L459.0,838.53 L459.5,839.06 L460.0,839.59 L460.5,840.13 L461.0,840.66 L461.5,841.20 L462.0,841.74 L462.5,842.28 L463.0,842.83 L463.5,843.37 L464.0,843.92 L464.5,844.47 L465.0,845.02 L465.5,845.58 L466.0,846.13 L466.5,846.70 L467.0,847.26 L467.5,847.83 L468.0,848.40 L468.5,848.97 L469.0,849.56 L469.5,850.14 L470.0,850.74 L470.5,851.34 L471.0,851.95 L471.5,852.58 L472.0,853.21 L472.5,853.85 L473.0,854.50 L473.5,855.16 L474.0,855.83 L474.5,856.50 L475.0,857.17 L475.5,857.84 L476.0,858.52 L476.5,859.19 L477.0,859.85 L477.5,860.51 L478.0,861.17 L478.5,861.81 L479.0,862.45 L479.5,863.08 L480.0,863.70 L480.5,864.32 L481.0,864.94 L481.5,865.55 L482.0,866.16 L482.5,866.77 L483.0,867.37 L483.5,867.97 L484.0,868.56 L484.5,869.15 L485.0,869.74 L485.5,870.32 L486.0,870.90 L486.5,871.47 L487.0,872.03 L487.5,872.60 L488.0,873.16 L488.5,873.71 L489.0,874.26 L489.5,874.80 L490.0,875.34 L490.5,875.87 L491.0,876.38 L491.5,876.88 L492.0,877.37 L492.5,877.83 L493.0,878.27 L493.5,878.69 L494.0,879.09 L494.5,879.45 L495.0,879.79 L495.5,880.11 L496.0,880.40 L496.5,880.65 L497.0,880.88 L497.5,881.08 L498.0,881.24 L498.5,881.38 L499.0,881.47 L499.5,881.53 L500.0,881.55 L500.5,881.54 L501.0,881.49 L501.5,881.41 L502.0,881.29 L502.5,881.13 L503.0,880.94 L503.5,880.71 L504.0,880.44 L504.5,880.13 L505.0,879.79 L505.5,879.40 L506.0,878.98 L506.5,878.52 L507.0,878.03 L507.5,877.49 L508.0,876.93 L508.5,876.33 L509.0,875.70 L509.5,875.04 L510.0,874.36 L510.5,873.66 L511.0,872.95 L511.5,872.22 L512.0,871.48 L512.5,870.74 L513.0,869.98 L513.5,869.23 L514.0,868.46 L514.5,867.69 L515.0,866.91 L515.5,866.13 L516.0,865.33 L516.5,864.53 L517.0,863.73 L517.5,862.92 L518.0,862.11 L518.5,861.29 L519.0,860.48 L519.5,859.66 L520.0,858.84 L520.5,858.03 L521.0,857.21 L521.5,856.40 L522.0,855.59 L522.5,854.78 L523.0,853.97 L523.5,853.16 L524.0,852.35 L524.5,851.53 L525.0,850.72 L525.5,849.91 L526.0,849.10 L526.5,848.29 L527.0,847.49 L527.5,846.69 L528.0,845.89 L528.5,845.09 L529.0,844.31 L529.5,843.53 L530.0,842.75 L530.5,841.98 L531.0,841.22 L531.5,840.46 L532.0,839.70 L532.5,838.94 L533.0,838.19 L533.5,837.45 L534.0,836.70 L534.5,835.97 L535.0,835.24 L535.5,834.52 L536.0,833.81 L536.5,833.11 L537.0,832.43 L537.5,831.77 L538.0,831.13 L538.5,830.51 L539.0,829.92 L539.5,829.37 L540.0,828.84 L540.5,828.35 L541.0,827.89 L541.5,827.48 L542.0,827.10 L542.5,826.77 L543.0,826.48 L543.5,826.24 L544.0,826.04 L544.5,825.88 L545.0,825.76 L545.5,825.68 L546.0,825.64 L546.5,825.63 L547.0,825.67 L547.5,825.74 L548.0,825.85 L548.5,826.01 L549.0,826.21 L549.5,826.45 L550.0,826.74 L550.5,827.06 L551.0,827.43 L551.5,827.84 L552.0,828.29 L552.5,828.78 L553.0,829.31 L553.5,829.87 L554.0,830.46 L554.5,831.08 L555.0,831.72 L555.5,832.37 L556.0,833.03 L556.5,833.69 L557.0,834.34 L557.5,834.98 L558.0,835.60 L558.5,836.21 L559.0,836.79 L559.5,837.34 L560.0,837.87 L560.5,838.36 L561.0,838.83 L561.5,839.27 L562.0,839.68 L562.5,840.07 L563.0,840.44 L563.5,840.78 L564.0,841.11 L564.5,841.43 L565.0,841.73 L565.5,842.02 L566.0,842.30 L566.5,842.57 L567.0,842.84 L567.5,843.09 L568.0,843.34 L568.5,843.59 L569.0,843.83 L569.5,844.07 L570.0,844.30 L570.5,844.53 L571.0,844.76 L571.5,844.99 L572.0,845.22 L572.5,845.44 L573.0,845.67 L573.5,845.90 L574.0,846.12 L574.5,846.34 L575.0,846.57 L575.5,846.78 L576.0,847.00 L576.5,847.21 L577.0,847.42 L577.5,847.62 L578.0,847.82 L578.5,848.01 L579.0,848.21 L579.5,848.40 L580.0,848.58 L580.5,848.77 L581.0,848.96 L581.5,849.14 L582.0,849.32 L582.5,849.51 L583.0,849.70 L583.5,849.88 L584.0,850.08 L584.5,850.27 L585.0,850.47 L585.5,850.67 L586.0,850.88 L586.5,851.09 L587.0,851.31 L587.5,851.53 L588.0,851.76 L588.5,851.99 L589.0,852.23 L589.5,852.47 L590.0,852.71 L590.5,852.96 L591.0,853.22 L591.5,853.48 L592.0,853.76 L592.5,854.04 L593.0,854.34 L593.5,854.66 L594.0,854.99 L594.5,855.35 L595.0,855.72 L595.5,856.13 L596.0,856.56 L596.5,857.01 L597.0,857.50 L597.5,858.01 L598.0,858.57 L598.5,859.16 L599.0,859.80 L599.5,860.49 L600.0,861.23 L600.5,862.04 L601.0,862.90 L601.5,863.84 L602.0,864.83 L602.5,865.89 L603.0,867.02 L603.5,868.20 L604.0,869.44 L604.5,870.72 L605.0,872.05 L605.5,873.42 L606.0,874.82 L606.5,876.25 L607.0,877.70 L607.5,879.16 L608.0,880.63 L608.5,882.06 L609.0,883.45 L609.5,884.72 L610.0,885.85 L610.5,886.80" stroke="#d0d0d0" stroke-width="3"/>
</g>
<rect x="53.5" y="31.5" width="1653" height="855" fill="none" stroke="#444" stroke-width="1"/>
<line x1="379.7" x2="379.7" y1="32" y2="891" stroke="#f0f0f0" stroke-width="1.5"/>
<line x1="51" x2="1707" y1="681" y2="681" stroke="#f0f0f0" stroke-width="1.5"/>
<circle cx="70.4" cy="47.0" r="7.1" fill="none" stroke="#828282" stroke-width="1.5"/><line x1="63.9" x2="76.9" y1="47.0" y2="47.0" stroke="#828282" stroke-width="2"/><line x1="70.4" x2="70.4" y1="40.5" y2="53.5" stroke="#828282" stroke-width="1.8"/>
<circle cx="70.4" cy="75.6" r="7.1" fill="none" stroke="#828282" stroke-width="1.5"/><line x1="63.9" x2="76.9" y1="75.6" y2="75.6" stroke="#828282" stroke-width="2"/>
<circle cx="1657.5" cy="869.6" r="7.1" fill="none" stroke="#828282" stroke-width="1.5"/><line x1="1651.0" x2="1664.0" y1="869.6" y2="869.6" stroke="#828282" stroke-width="2"/>
<circle cx="1688.6" cy="869.6" r="7.1" fill="none" stroke="#828282" stroke-width="1.5"/><line x1="1682.1" x2="1695.1" y1="869.6" y2="869.6" stroke="#828282" stroke-width="2"/><line x1="1688.6" x2="1688.6" y1="863.1" y2="876.1" stroke="#828282" stroke-width="1.8"/>
</svg>
<div class="spl">SPL</div>
<div style="position:absolute;left:1533px;top:0;width:3px;height:2.5px;border-radius:0 0 1.5px 1.5px;background:#d8d8d8"></div>
<div class="yl" style="top:55.8px">140</div>
<div class="yl" style="top:127.1px">135</div>
<div class="yl" style="top:198.5px">130</div>
<div class="yl" style="top:269.8px">125</div>
<div class="yl" style="top:341.2px">120</div>
<div class="yl" style="top:412.5px">115</div>
<div class="yl" style="top:483.9px">110</div>
<div class="yl" style="top:555.2px">105</div>
<div class="yl" style="top:626.5px">100</div>
<div class="yl" style="top:697.9px">95</div>
<div class="yl" style="top:769.2px">90</div>
<div class="yl" style="top:840.6px">85</div>
<div class="xl xw" style="left:11.1px">6</div>
<div class="xl xw" style="left:80.1px">7</div>
<div class="xl xw" style="left:140.0px">8</div>
<div class="xl xw" style="left:192.8px">9</div>
<div class="xl xw" style="left:240.0px">10</div>
<div class="xl xw" style="left:550.7px">20</div>
<div class="xl xw" style="left:732.4px">30</div>
<div class="xl xw" style="left:861.3px">40</div>
<div class="xl xw" style="left:961.3px">50</div>
<div class="xl xw" style="left:1043.1px">60</div>
<div class="xl xw" style="left:1112.1px">70</div>
<div class="xl xw" style="left:1172.0px">80</div>
<div class="xl xw" style="left:1224.8px">90</div>
<div class="xl xw" style="left:1272.0px">100</div>
<div class="xl xg" style="left:1314.7px">110</div>
<div class="xl xg" style="left:1353.7px">120</div>
<div class="xl xg" style="left:1422.8px">140</div>
<div class="xl xg" style="left:1482.7px">160</div>
<div class="xl xg" style="left:1535.4px">180</div>
<div class="xl xw" style="left:1582.7px">200</div>
<div class="xl xw" style="left:1682px;width:80px;text-align:left">236Hz</div>
<div class="cursorx">12.22</div>
<div class="cursory"><span>96.7</span></div>
<div class="dd"><span>SPL</span><i></i></div>
<div class="btn" style="top:802px">10 .. 200</div>
<div class="btn" style="top:831px">20 .. 20,000</div>
<div class="sb"><div class="sbl"></div><div class="thumb"></div><div class="sbr"></div></div>
<div class="panel"></div>
<div class="cb" style="left:67.8px;top:947.3px"><svg width="18" height="18"><path d="M4.8,9.8 L8,13.2 L13.3,5" fill="none" stroke="#c4c4c4" stroke-width="1.9" stroke-linecap="round" stroke-linejoin="round"/></svg></div>
<div class="ln" style="left:90.4px;top:948.5px;color:#b8621e">Fundamental</div>
<div class="ls" style="left:348.3px;top:956.0px;background:#a85618"></div>
<div class="lv" style="left:347.8px;top:948.5px;color:#b8621e">118.4 dB</div>
<div class="cb" style="left:608.3px;top:947.3px"><svg width="18" height="18"><path d="M4.8,9.8 L8,13.2 L13.3,5" fill="none" stroke="#c4c4c4" stroke-width="1.9" stroke-linecap="round" stroke-linejoin="round"/></svg></div>
<div class="ln" style="left:630.9px;top:948.5px;color:#cc0808">2nd Harmonic</div>
<div class="ls" style="left:888.8px;top:956.0px;background:#cc0808"></div>
<div class="lv" style="left:888.3px;top:948.5px;color:#cc0808">3.21<span class="pc">%</span></div>
<div class="cb" style="left:1148.8px;top:947.3px"><svg width="18" height="18"><path d="M4.8,9.8 L8,13.2 L13.3,5" fill="none" stroke="#c4c4c4" stroke-width="1.9" stroke-linecap="round" stroke-linejoin="round"/></svg></div>
<div class="ln" style="left:1171.4px;top:948.5px;color:#f0a000">3rd Harmonic</div>
<div class="ls" style="left:1429.3px;top:956.0px;background:#f0a000"></div>
<div class="lv" style="left:1428.8px;top:948.5px;color:#f0a000">4.90<span class="pc">%</span></div>
<div class="cb" style="left:67.8px;top:981.2px"><svg width="18" height="18"><path d="M4.8,9.8 L8,13.2 L13.3,5" fill="none" stroke="#c4c4c4" stroke-width="1.9" stroke-linecap="round" stroke-linejoin="round"/></svg></div>
<div class="ln" style="left:90.4px;top:982.4px;color:#e0c000">4th Harmonic</div>
<div class="ls" style="left:348.3px;top:989.9px;background:#e0c000"></div>
<div class="lv" style="left:347.8px;top:982.4px;color:#e0c000">0.171<span class="pc">%</span></div>
<div class="cb" style="left:608.3px;top:981.2px"><svg width="18" height="18"><path d="M4.8,9.8 L8,13.2 L13.3,5" fill="none" stroke="#c4c4c4" stroke-width="1.9" stroke-linecap="round" stroke-linejoin="round"/></svg></div>
<div class="ln" style="left:630.9px;top:982.4px;color:#33cc33">5th Harmonic</div>
<div class="ls" style="left:888.8px;top:989.9px;background:#33cc33"></div>
<div class="lv" style="left:888.3px;top:982.4px;color:#33cc33">0.191<span class="pc">%</span></div>
<div class="cb" style="left:1148.8px;top:981.2px"><svg width="18" height="18"><path d="M4.8,9.8 L8,13.2 L13.3,5" fill="none" stroke="#c4c4c4" stroke-width="1.9" stroke-linecap="round" stroke-linejoin="round"/></svg></div>
<div class="ln" style="left:1171.4px;top:982.4px;color:#6a90f0">6th Harmonic</div>
<div class="ls" style="left:1429.3px;top:989.9px;background:#6a90f0"></div>
<div class="lv" style="left:1428.8px;top:982.4px;color:#6a90f0">0.147<span class="pc">%</span></div>
<div class="cb" style="left:67.8px;top:1015.1px"><svg width="18" height="18"><path d="M4.8,9.8 L8,13.2 L13.3,5" fill="none" stroke="#c4c4c4" stroke-width="1.9" stroke-linecap="round" stroke-linejoin="round"/></svg></div>
<div class="ln" style="left:90.4px;top:1016.3px;color:#e878e8">7th Harmonic</div>
<div class="ls" style="left:348.3px;top:1023.8px;background:#e878e8"></div>
<div class="lv" style="left:347.8px;top:1016.3px;color:#e878e8">0.056<span class="pc">%</span></div>
<div class="cb" style="left:608.3px;top:1015.1px"><svg width="18" height="18"><path d="M4.8,9.8 L8,13.2 L13.3,5" fill="none" stroke="#c4c4c4" stroke-width="1.9" stroke-linecap="round" stroke-linejoin="round"/></svg></div>
<div class="ln" style="left:630.9px;top:1016.3px;color:#bbbbbb">8th Harmonic</div>
<div class="ls" style="left:888.8px;top:1023.8px;background:#bbbbbb"></div>
<div class="lv" style="left:888.3px;top:1016.3px;color:#bbbbbb">0.013<span class="pc">%</span></div>
<div class="cb" style="left:1148.8px;top:1015.1px"><svg width="18" height="18"><path d="M4.8,9.8 L8,13.2 L13.3,5" fill="none" stroke="#c4c4c4" stroke-width="1.9" stroke-linecap="round" stroke-linejoin="round"/></svg></div>
<div class="ln" style="left:1171.4px;top:1016.3px;color:#00dede">9th Harmonic</div>
<div class="ls" style="left:1429.3px;top:1023.8px;background:#00dede"></div>
<div class="lv" style="left:1428.8px;top:1016.3px;color:#00dede">0.040<span class="pc">%</span></div>
<div class="cb" style="left:67.8px;top:1049.0px"><svg width="18" height="18"><path d="M4.8,9.8 L8,13.2 L13.3,5" fill="none" stroke="#c4c4c4" stroke-width="1.9" stroke-linecap="round" stroke-linejoin="round"/></svg></div>
<div class="ln" style="left:90.4px;top:1048.0px;color:#d0d0d0">THD<sub>H2..9</sub></div>
<div class="ls" style="left:348.3px;top:1057.7px;background:#d0d0d0"></div>
<div class="lv" style="left:347.8px;top:1050.2px;color:#d0d0d0">5.87<span class="pc">%</span></div>
<div class="cb" style="left:608.3px;top:1049.0px"><svg width="18" height="18"><path d="M4.8,9.8 L8,13.2 L13.3,5" fill="none" stroke="#c4c4c4" stroke-width="1.9" stroke-linecap="round" stroke-linejoin="round"/></svg></div>
<div class="ln" style="left:630.9px;top:1050.2px;color:#86461a">Noise floor</div>
<div class="ls" style="left:888.8px;top:1057.7px;background:#7a4016"></div>
<div class="lv" style="left:888.3px;top:1050.2px;color:#86461a">0.016<span class="pc">%</span></div>
</body></html>
